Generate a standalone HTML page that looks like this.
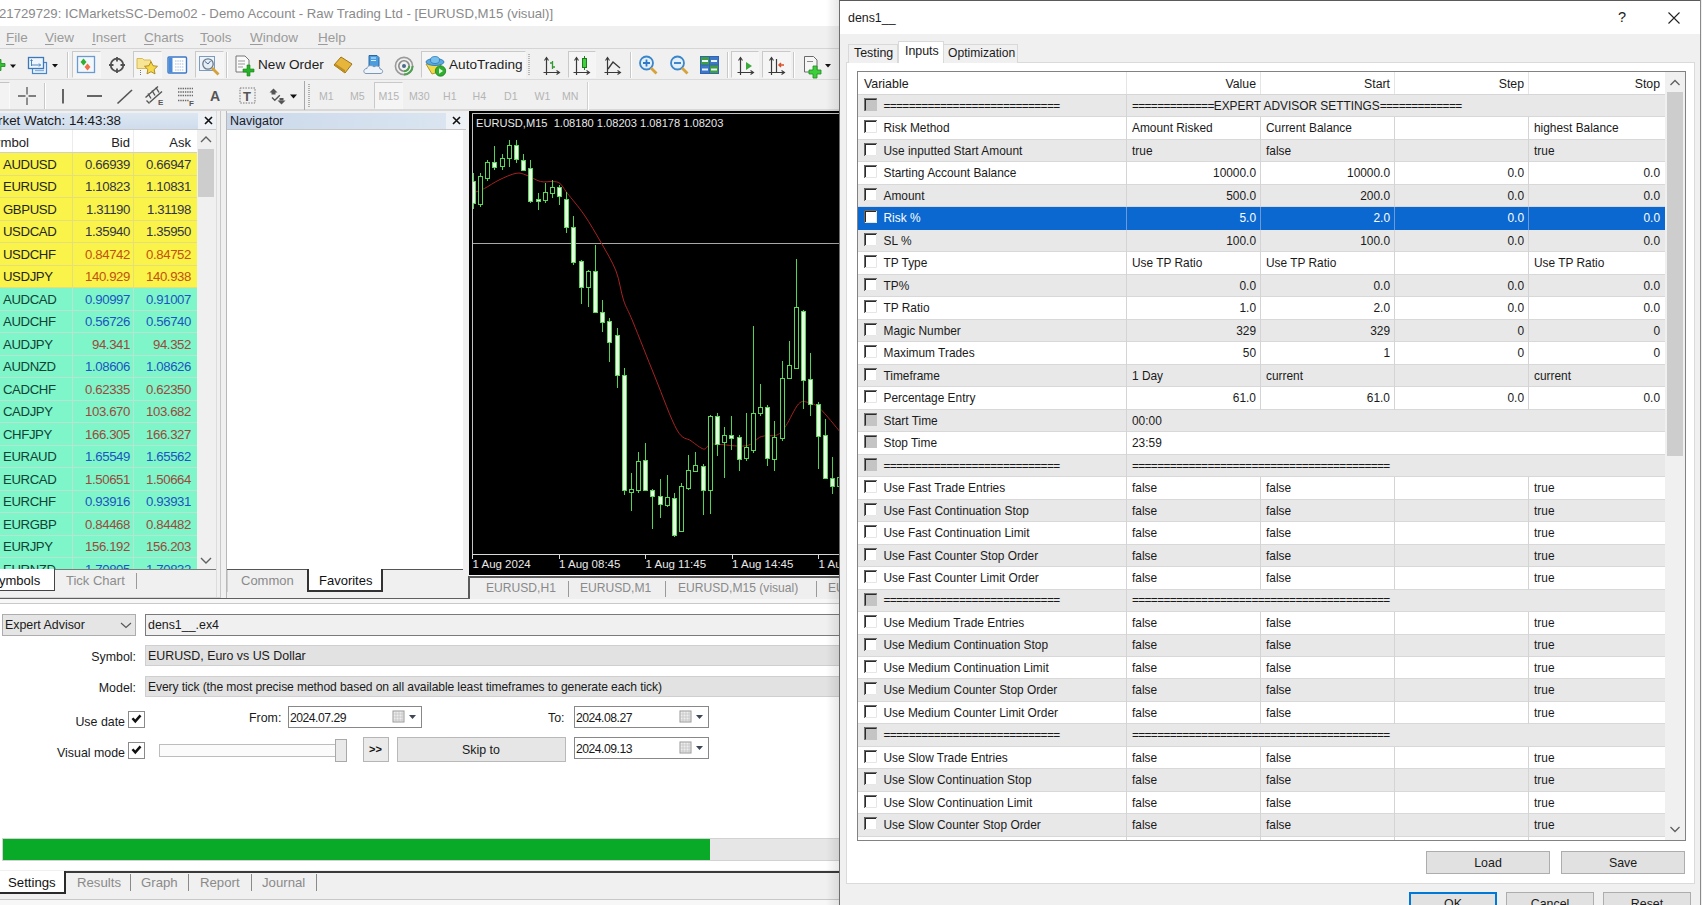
<!DOCTYPE html><html><head><meta charset="utf-8"><style>
*{box-sizing:border-box;margin:0;padding:0}
body{width:1702px;height:905px;overflow:hidden;position:relative;background:#f0f0f0;font-family:"Liberation Sans",sans-serif;color:#222;font-size:12px}
.a{position:absolute}
.t{position:absolute;white-space:nowrap;line-height:1}
u{text-decoration:none;border-bottom:1px solid currentColor;line-height:0.9;display:inline-block}
</style></head><body><div class="a" style="left:0px;top:0px;width:840px;height:26px;background:#fff"></div>
<div class="t" style="left:-1px;top:6.5px;font-size:13.2px;color:#8a8a8a">21729729: ICMarketsSC-Demo02 - Demo Account - Raw Trading Ltd - [EURUSD,M15 (visual)]</div>
<div class="a" style="left:0px;top:26px;width:840px;height:23px;background:#f0f0f0"></div>
<div class="a" style="left:0px;top:48px;width:840px;height:1px;background:#d5d5d5"></div>
<div class="t" style="left:6px;top:31px;font-size:13.5px;color:#9b9b9b"><span style="text-decoration:underline;text-underline-offset:2px">F</span>ile</div>
<div class="t" style="left:45px;top:31px;font-size:13.5px;color:#9b9b9b"><span style="text-decoration:underline;text-underline-offset:2px">V</span>iew</div>
<div class="t" style="left:92px;top:31px;font-size:13.5px;color:#9b9b9b"><span style="text-decoration:underline;text-underline-offset:2px">I</span>nsert</div>
<div class="t" style="left:144px;top:31px;font-size:13.5px;color:#9b9b9b"><span style="text-decoration:underline;text-underline-offset:2px">C</span>harts</div>
<div class="t" style="left:200px;top:31px;font-size:13.5px;color:#9b9b9b"><span style="text-decoration:underline;text-underline-offset:2px">T</span>ools</div>
<div class="t" style="left:250px;top:31px;font-size:13.5px;color:#9b9b9b"><span style="text-decoration:underline;text-underline-offset:2px">W</span>indow</div>
<div class="t" style="left:318px;top:31px;font-size:13.5px;color:#9b9b9b"><span style="text-decoration:underline;text-underline-offset:2px">H</span>elp</div>
<div class="a" style="left:0px;top:49px;width:840px;height:30px;background:#f0f0f0"></div>
<div class="a" style="left:0px;top:79px;width:840px;height:1px;background:#dadada"></div>
<div class="a" style="left:0px;top:80px;width:840px;height:30px;background:#f0f0f0"></div>
<div class="a" style="left:0px;top:109px;width:840px;height:2px;background:#d8d8d8"></div>
<svg class="a" style="left:0px;top:56px;" width="20" height="20" viewBox="0 0 20 20"><path d="M-6 7.5h4v-4h3v4h4v3h-4v4h-3v-4h-4z" fill="#33c033" stroke="#1d8a1d" stroke-width="0.8"/><path d="M10 8.5h6l-3 3.5z" fill="#111"/></svg>
<svg class="a" style="left:27px;top:55px;" width="36" height="21" viewBox="0 0 36 21"><rect x="5.5" y="7.5" width="14" height="11" fill="#eaf3fc" stroke="#4a86c6" stroke-width="1.2"/><path d="M8 15.5h9" stroke="#8ab0d8" stroke-width="1.4"/><rect x="1.5" y="2.5" width="15" height="11" fill="#eef5fc" stroke="#3c78b8" stroke-width="1.3"/><path d="M4.5 5v6M4.5 10h9M12 8.5l1.5 1.5L12 11.5M3.5 6l1 -1.5l1 1.5" stroke="#3c78b8" stroke-width="0.9" fill="none"/><path d="M25 9h6l-3 3.5z" fill="#111"/></svg>
<div class="a" style="left:67px;top:52px;width:1px;height:26px;background:#c8c8c8"></div>
<div class="a" style="left:68px;top:52px;width:1px;height:26px;background:#fff"></div>
<div class="a" style="left:72px;top:51px;width:29px;height:27px;border:1px solid #d9d9d9;border-top-color:#c9c9c9;border-left-color:#c9c9c9;border-right-color:#f6f6f6;border-bottom-color:#f6f6f6;background:#f5f5f5"></div>
<svg class="a" style="left:76px;top:55px;" width="21" height="20" viewBox="0 0 21 20"><rect x="1.5" y="1.5" width="17" height="16" fill="#f2f7fc" stroke="#6a9ad0" stroke-width="1.3"/><path d="M4.5 7L7.5 3.5L10.5 7L7.5 10.5z" fill="#30b030"/><path d="M8.5 12L11.5 8.5L14.5 12L11.5 15.5z" fill="#f07048"/></svg>
<svg class="a" style="left:106px;top:55px;" width="22" height="21" viewBox="0 0 22 21"><circle cx="11" cy="10" r="6.3" fill="none" stroke="#505050" stroke-width="1.8"/><path d="M11 2v4.5M11 13.5V18M3 10h4.5M14.5 10H19" stroke="#505050" stroke-width="1.8"/></svg>
<div class="a" style="left:133px;top:51px;width:29px;height:27px;border:1px solid #d9d9d9;border-top-color:#c9c9c9;border-left-color:#c9c9c9;border-right-color:#f6f6f6;border-bottom-color:#f6f6f6;background:#f5f5f5"></div>
<svg class="a" style="left:136px;top:55px;" width="23" height="21" viewBox="0 0 23 21"><path d="M1 3.5h5.5l1.5 1.5h6.5v8.5H1z" fill="#f7e494" stroke="#d4b648" stroke-width="0.9"/><path d="M15 6.5l2 4.2 4.5.6-3.3 3.1.8 4.5-4-2.2-4 2.2.8-4.5-3.3-3.1 4.5-.6z" fill="#f6d84a" stroke="#a8861c" stroke-width="0.9"/><path d="M4.5 15v5" stroke="#777" stroke-width="1" stroke-dasharray="1 1"/></svg>
<svg class="a" style="left:167px;top:56px;" width="21" height="18" viewBox="0 0 21 18"><rect x="1" y="1" width="18.5" height="16" rx="1" fill="#fff" stroke="#3a78c8" stroke-width="1.4"/><rect x="1.5" y="1.5" width="4" height="15" fill="#4a8ad8"/><path d="M8 5h9M8 8h9M8 11h9M8 14h9" stroke="#9ab8dc" stroke-width="0.9" stroke-dasharray="1.5 0.8"/></svg>
<div class="a" style="left:195px;top:51px;width:29px;height:27px;border:1px solid #d9d9d9;border-top-color:#c9c9c9;border-left-color:#c9c9c9;border-right-color:#f6f6f6;border-bottom-color:#f6f6f6;background:#f5f5f5"></div>
<svg class="a" style="left:198px;top:54px;" width="24" height="23" viewBox="0 0 24 23"><rect x="1.5" y="2.5" width="15" height="14" fill="#edf3f9" stroke="#7a9cc0" stroke-width="1"/><circle cx="10" cy="10" r="5.2" fill="#e6eef6" stroke="#6a7a8a" stroke-width="1.3"/><path d="M7 7.5l3 2.5l2.5 -3" stroke="#4a6a9a" stroke-width="1" fill="none"/><path d="M14 14l6.5 6.5" stroke="#d4a23a" stroke-width="2.8"/></svg>
<div class="a" style="left:226px;top:52px;width:1px;height:26px;background:#c8c8c8"></div>
<div class="a" style="left:227px;top:52px;width:1px;height:26px;background:#fff"></div>
<svg class="a" style="left:234px;top:54px;" width="22" height="24" viewBox="0 0 22 24"><path d="M2 2h9l4 4v12H2z" fill="#fafafa" stroke="#777" stroke-width="1"/><path d="M4 7h7M4 10h7M4 13h5" stroke="#999"/><path d="M13 11h3v4h4v3h-4v4h-3v-4H9v-3h4z" fill="#27b327" stroke="#1a801a" stroke-width="0.6"/></svg>
<div class="t" style="left:258px;top:58px;font-size:13.6px;color:#1e1e1e">New Order</div>
<svg class="a" style="left:332px;top:55px;" width="22" height="20" viewBox="0 0 22 20"><path d="M2 10l7 -8l11 7l-7 9z" fill="#e6b53c" stroke="#9c7414" stroke-width="1"/><path d="M2 10l11 8l0 -3l-9 -6z" fill="#c08d20"/></svg>
<svg class="a" style="left:362px;top:53px;" width="24" height="24" viewBox="0 0 24 24"><path d="M7 2.5h8l2 2v9h-10z" fill="#4a9ee0" stroke="#1f5c9a" stroke-width="0.9"/><path d="M9 5h5M9 7.5h5" stroke="#d8ecfb" stroke-width="1"/><path d="M4 20.5c-3 0-3-5 1-5c0-3 5-4 7-1.5c2-2 6-1 6 2c3 0 4 4.5 0 4.5z" fill="#eef4fa" stroke="#7d97b3" stroke-width="1"/></svg>
<svg class="a" style="left:393px;top:55px;" width="22" height="22" viewBox="0 0 22 22"><circle cx="11" cy="11" r="8.6" fill="none" stroke="#9a9a9a" stroke-width="1.6"/><circle cx="11" cy="11" r="5.2" fill="none" stroke="#8a8a8a" stroke-width="1.6"/><circle cx="11" cy="11" r="2" fill="#4a6a8a"/><path d="M19.6 11A8.6 8.6 0 0 1 11 19.6M16.2 11A5.2 5.2 0 0 1 11 16.2" fill="none" stroke="#4fa04f" stroke-width="2"/></svg>
<div class="a" style="left:421px;top:51px;width:105px;height:27px;border:1px solid #d9d9d9;border-top-color:#c9c9c9;border-left-color:#c9c9c9;border-right-color:#f6f6f6;border-bottom-color:#f6f6f6;background:#f5f5f5"></div>
<svg class="a" style="left:424px;top:54px;" width="24" height="23" viewBox="0 0 24 23"><path d="M2 10L16 8L18 17L8 20z" fill="#efd84a" stroke="#a89020" stroke-width="0.9"/><ellipse cx="11" cy="8" rx="9" ry="3.5" fill="#5aaae0" stroke="#2f78b8" stroke-width="0.9"/><ellipse cx="11" cy="6" rx="4.5" ry="3.5" fill="#78c0ec" stroke="#2f78b8" stroke-width="0.8"/><circle cx="16.5" cy="17" r="5.2" fill="#2fae2f" stroke="#1f801f" stroke-width="0.8"/><path d="M15 14.3l4 2.7l-4 2.7z" fill="#dfffdf"/></svg>
<div class="t" style="left:449px;top:58px;font-size:13.6px;color:#1e1e1e">AutoTrading</div>
<div class="a" style="left:528px;top:54px;width:2px;height:22px;background:repeating-linear-gradient(#b8b8b8 0 1px,transparent 1px 2px)"></div>
<svg class="a" style="left:540px;top:55px;" width="24" height="22" viewBox="0 0 24 22"><path d="M6.5 3V17.5H19" stroke="#3a3a3a" stroke-width="1.2" fill="none"/><path d="M4.5 5.5L6.5 2.5L8.5 5.5M16.5 15.5L19.5 17.5L16.5 19.5" stroke="#3a3a3a" stroke-width="1.1" fill="none"/><path d="M3.5 17.5H6.5M6.5 17.5V20" stroke="#3a3a3a" stroke-width="1.2"/><path d="M12.5 6V14M10 8H12.5M12.5 12H15" stroke="#2f9a2f" stroke-width="1.3"/></svg>
<div class="a" style="left:568px;top:51px;width:28px;height:27px;border:1px solid #d9d9d9;border-top-color:#c9c9c9;border-left-color:#c9c9c9;border-right-color:#f6f6f6;border-bottom-color:#f6f6f6;background:#f5f5f5"></div>
<svg class="a" style="left:570px;top:55px;" width="24" height="22" viewBox="0 0 24 22"><path d="M6.5 3V17.5H19" stroke="#3a3a3a" stroke-width="1.2" fill="none"/><path d="M4.5 5.5L6.5 2.5L8.5 5.5M16.5 15.5L19.5 17.5L16.5 19.5" stroke="#3a3a3a" stroke-width="1.1" fill="none"/><path d="M3.5 17.5H6.5M6.5 17.5V20" stroke="#3a3a3a" stroke-width="1.2"/><rect x="12.5" y="3.5" width="4" height="9" fill="#3fcf3f" stroke="#1f7a1f"/><path d="M14.5 1V3.5M14.5 12.5V15" stroke="#1f7a1f"/></svg>
<svg class="a" style="left:601px;top:55px;" width="24" height="22" viewBox="0 0 24 22"><path d="M6.5 3V17.5H19" stroke="#3a3a3a" stroke-width="1.2" fill="none"/><path d="M4.5 5.5L6.5 2.5L8.5 5.5M16.5 15.5L19.5 17.5L16.5 19.5" stroke="#3a3a3a" stroke-width="1.1" fill="none"/><path d="M3.5 17.5H6.5M6.5 17.5V20" stroke="#3a3a3a" stroke-width="1.2"/><path d="M7 14L12 7L19 13" stroke="#3a3a3a" stroke-width="1.3" fill="none"/></svg>
<div class="a" style="left:630px;top:52px;width:1px;height:26px;background:#c8c8c8"></div>
<div class="a" style="left:631px;top:52px;width:1px;height:26px;background:#fff"></div>
<svg class="a" style="left:637px;top:54px;" width="24" height="24" viewBox="0 0 24 24"><circle cx="9.5" cy="9" r="6.5" fill="#e2f0fb" stroke="#3a86c8" stroke-width="1.8"/><path d="M6 9h7M9.5 5.5v7" stroke="#2f7ac8" stroke-width="1.8"/><path d="M14 14l5.5 5.5" stroke="#d8a23a" stroke-width="2.8"/></svg>
<svg class="a" style="left:668px;top:54px;" width="24" height="24" viewBox="0 0 24 24"><circle cx="9.5" cy="9" r="6.5" fill="#e2f0fb" stroke="#3a86c8" stroke-width="1.8"/><path d="M6 9h7" stroke="#2f7ac8" stroke-width="1.8"/><path d="M14 14l5.5 5.5" stroke="#d8a23a" stroke-width="2.8"/></svg>
<svg class="a" style="left:699px;top:55px;" width="21" height="20" viewBox="0 0 21 20"><rect x="1" y="1" width="19" height="18" fill="#2e64b0"/><rect x="2" y="2" width="8" height="7.5" fill="#3f9f3f"/><rect x="11" y="2" width="8" height="7.5" fill="#3d78c8"/><rect x="2" y="10.5" width="8" height="7.5" fill="#3d78c8"/><rect x="11" y="10.5" width="8" height="7.5" fill="#3f9f3f"/><path d="M3 6h6M12 6h6M3 14.5h6M12 14.5h6" stroke="#e8f2ff" stroke-width="2"/></svg>
<div class="a" style="left:727px;top:52px;width:1px;height:26px;background:#c8c8c8"></div>
<div class="a" style="left:728px;top:52px;width:1px;height:26px;background:#fff"></div>
<div class="a" style="left:731px;top:51px;width:28px;height:27px;border:1px solid #d9d9d9;border-top-color:#c9c9c9;border-left-color:#c9c9c9;border-right-color:#f6f6f6;border-bottom-color:#f6f6f6;background:#f5f5f5"></div>
<svg class="a" style="left:734px;top:55px;" width="24" height="22" viewBox="0 0 24 22"><path d="M6.5 3V17.5H19" stroke="#3a3a3a" stroke-width="1.2" fill="none"/><path d="M4.5 5.5L6.5 2.5L8.5 5.5M16.5 15.5L19.5 17.5L16.5 19.5" stroke="#3a3a3a" stroke-width="1.1" fill="none"/><path d="M3.5 17.5H6.5M6.5 17.5V20" stroke="#3a3a3a" stroke-width="1.2"/><path d="M12 7L18 11L12 15z" fill="#3aaa3a"/></svg>
<div class="a" style="left:762px;top:51px;width:29px;height:27px;border:1px solid #d9d9d9;border-top-color:#c9c9c9;border-left-color:#c9c9c9;border-right-color:#f6f6f6;border-bottom-color:#f6f6f6;background:#f5f5f5"></div>
<svg class="a" style="left:765px;top:55px;" width="24" height="22" viewBox="0 0 24 22"><path d="M6.5 3V17.5H19" stroke="#3a3a3a" stroke-width="1.2" fill="none"/><path d="M4.5 5.5L6.5 2.5L8.5 5.5M16.5 15.5L19.5 17.5L16.5 19.5" stroke="#3a3a3a" stroke-width="1.1" fill="none"/><path d="M3.5 17.5H6.5M6.5 17.5V20" stroke="#3a3a3a" stroke-width="1.2"/><path d="M11.5 4V17" stroke="#3a3a3a" stroke-width="1.2"/><path d="M19 10H14M16 8L14 10L16 12" stroke="#d8502a" stroke-width="1.5" fill="none"/></svg>
<div class="a" style="left:793px;top:52px;width:1px;height:26px;background:#c8c8c8"></div>
<div class="a" style="left:794px;top:52px;width:1px;height:26px;background:#fff"></div>
<svg class="a" style="left:800px;top:53px;" width="36" height="26" viewBox="0 0 36 26"><path d="M4.5 3.5h9l3.5 3.5v12H4.5z" fill="#f6f6f6" stroke="#6a6a6a" stroke-width="1"/><path d="M7 8.5h6" stroke="#888"/><path d="M13 13h4v4h4v4h-4v4h-4v-4H9v-4h4z" fill="#3ccf3c" stroke="#1f8a1f" stroke-width="0.8"/><path d="M25 11h6l-3 3.5z" fill="#111"/></svg>
<div class="a" style="left:0px;top:82px;width:10px;height:27px;border-top:1px solid #c4c4c4;border-right:1px solid #fafafa;background:#f3f3f3"></div>
<svg class="a" style="left:17px;top:86px;" width="20" height="20" viewBox="0 0 20 20"><path d="M10 1v7.5M10 11.5V19M1 10h7.5M11.5 10H19" stroke="#5a5a5a" stroke-width="1.3"/></svg>
<div class="a" style="left:44px;top:83px;width:1px;height:26px;background:#c8c8c8"></div>
<div class="a" style="left:45px;top:83px;width:1px;height:26px;background:#fff"></div>
<svg class="a" style="left:56px;top:86px;" width="14" height="20" viewBox="0 0 14 20"><path d="M7 3v14.5" stroke="#555" stroke-width="1.8"/></svg>
<svg class="a" style="left:84px;top:86px;" width="22" height="20" viewBox="0 0 22 20"><path d="M3 10h15" stroke="#555" stroke-width="1.8"/></svg>
<svg class="a" style="left:114px;top:86px;" width="22" height="20" viewBox="0 0 22 20"><path d="M3.5 17.5L18 4" stroke="#555" stroke-width="1.7"/></svg>
<svg class="a" style="left:144px;top:84px;" width="24" height="24" viewBox="0 0 24 24"><path d="M1.5 13.5L14 2.5M5.5 18.5L18 7.5" stroke="#555" stroke-width="1.4"/><path d="M4 9.5l3 5M8 6.5l3 5M12 3.5l3 5M2.5 16.5l3 3" stroke="#555" stroke-width="1.4"/><text x="14" y="21" font-size="8" font-weight="bold" fill="#555" font-family="Liberation Sans">E</text></svg>
<svg class="a" style="left:176px;top:84px;" width="24" height="24" viewBox="0 0 24 24"><path d="M2 4.5h15M2 8h15M2 11.5h15M2 16.5h11" stroke="#6a6a6a" stroke-width="1.3" stroke-dasharray="1.4 0.9"/><text x="13" y="21.5" font-size="8" font-weight="bold" fill="#555" font-family="Liberation Sans">F</text></svg>
<div class="t" style="left:210px;top:89px;font-size:14px;font-weight:bold;color:#555">A</div>
<svg class="a" style="left:238px;top:85px;" width="20" height="22" viewBox="0 0 20 22"><rect x="2" y="3" width="15" height="15" fill="none" stroke="#777" stroke-dasharray="1.5 1.2"/><text x="5" y="16" font-size="13" font-weight="bold" fill="#555" font-family="Liberation Sans">T</text></svg>
<svg class="a" style="left:266px;top:85px;" width="36" height="22" viewBox="0 0 36 22"><path d="M3.5 7.5L7.5 3.5L11.5 7.5z" fill="#555"/><rect x="5.5" y="7" width="4" height="2.5" fill="#555"/><path d="M6 12.5l2.8 2.8l5 -5" stroke="#555" stroke-width="1.4" fill="none"/><path d="M11.5 15.5L15.5 19.5L19.5 15.5z" fill="#555"/><rect x="13.5" y="13" width="4" height="2.5" fill="#555"/><path d="M24 9.5h7l-3.5 4z" fill="#111"/></svg>
<div class="a" style="left:304px;top:81px;width:1px;height:29px;background:#a8a8a8"></div>
<div class="a" style="left:308px;top:84px;width:2px;height:24px;background:repeating-linear-gradient(#b0b0b0 0 1px,transparent 1px 2px)"></div>
<div class="a" style="left:374px;top:82px;width:29px;height:27px;border:1px solid #d9d9d9;border-top-color:#c9c9c9;border-left-color:#c9c9c9;border-right-color:#f6f6f6;border-bottom-color:#f6f6f6;background:#f5f5f5"></div>
<div class="t" style="left:319px;top:91px;font-size:10.6px;color:#b4b4b4">M1</div>
<div class="t" style="left:350px;top:91px;font-size:10.6px;color:#b4b4b4">M5</div>
<div class="t" style="left:378.5px;top:91px;font-size:10.6px;color:#b4b4b4">M15</div>
<div class="t" style="left:409px;top:91px;font-size:10.6px;color:#b4b4b4">M30</div>
<div class="t" style="left:443px;top:91px;font-size:10.6px;color:#b4b4b4">H1</div>
<div class="t" style="left:472.5px;top:91px;font-size:10.6px;color:#b4b4b4">H4</div>
<div class="t" style="left:504px;top:91px;font-size:10.6px;color:#b4b4b4">D1</div>
<div class="t" style="left:534.5px;top:91px;font-size:10.6px;color:#b4b4b4">W1</div>
<div class="t" style="left:562px;top:91px;font-size:10.6px;color:#b4b4b4">MN</div>
<div class="a" style="left:587px;top:82px;width:1px;height:28px;background:#d0d0d0"></div>
<div class="a" style="left:588px;top:82px;width:1px;height:28px;background:#fff"></div>
<div class="a" style="left:0px;top:111px;width:218px;height:490px;background:#f0f0f0"></div>
<div class="a" style="left:0px;top:113px;width:198px;height:16px;background:linear-gradient(#dde7f2,#cfdcec)"></div>
<div class="a" style="left:198px;top:113px;width:18px;height:16px;background:#eef2f6"></div>
<div class="t" style="left:-2px;top:114px;font-size:13.4px;color:#1a1a1a">rket Watch: 14:43:38</div>
<svg class="a" style="left:204px;top:116px;" width="9" height="9" viewBox="0 0 9 9"><path d="M1 1L8 8M8 1L1 8" stroke="#111" stroke-width="1.6"/></svg>
<div class="a" style="left:0px;top:129px;width:216px;height:1px;background:#c9c9c9"></div>
<div class="a" style="left:0px;top:130px;width:197px;height:23px;background:#fff"></div>
<div class="a" style="left:72px;top:130px;width:1px;height:23px;background:#ececec"></div>
<div class="a" style="left:133px;top:130px;width:1px;height:23px;background:#ececec"></div>
<div class="t" style="left:-15px;top:136px;font-size:13.2px;color:#222">Symbol</div>
<div class="t" style="right:1572px;top:136px;font-size:13px;color:#222">Bid</div>
<div class="t" style="right:1511px;top:136px;font-size:13px;color:#222">Ask</div>
<div class="a" style="left:0px;top:152px;width:197px;height:1px;background:#cfcfcf"></div>
<div class="a" style="left:0;top:153px;width:197px;height:416px;overflow:hidden">
<div class="a" style="left:0;top:0.0px;width:197px;height:22.5px;background:#f9f34a;border-bottom:1px solid #e6df78"></div>
<div class="a" style="left:72px;top:0.0px;width:1px;height:22.5px;background:#e6df78"></div>
<div class="a" style="left:133px;top:0.0px;width:1px;height:22.5px;background:#e6df78"></div>
<div class="t" style="left:3px;top:4.8px;font-size:13.2px;letter-spacing:-0.4px;color:#26261a">AUDUSD</div>
<div class="t" style="right:67px;top:4.8px;font-size:13.2px;letter-spacing:-0.38px;color:#333344">0.66939</div>
<div class="t" style="right:6px;top:4.8px;font-size:13.2px;letter-spacing:-0.38px;color:#333344">0.66947</div>
<div class="a" style="left:0;top:22.5px;width:197px;height:22.5px;background:#f9f34a;border-bottom:1px solid #e6df78"></div>
<div class="a" style="left:72px;top:22.5px;width:1px;height:22.5px;background:#e6df78"></div>
<div class="a" style="left:133px;top:22.5px;width:1px;height:22.5px;background:#e6df78"></div>
<div class="t" style="left:3px;top:27.3px;font-size:13.2px;letter-spacing:-0.4px;color:#26261a">EURUSD</div>
<div class="t" style="right:67px;top:27.3px;font-size:13.2px;letter-spacing:-0.38px;color:#333344">1.10823</div>
<div class="t" style="right:6px;top:27.3px;font-size:13.2px;letter-spacing:-0.38px;color:#333344">1.10831</div>
<div class="a" style="left:0;top:45.0px;width:197px;height:22.5px;background:#f9f34a;border-bottom:1px solid #e6df78"></div>
<div class="a" style="left:72px;top:45.0px;width:1px;height:22.5px;background:#e6df78"></div>
<div class="a" style="left:133px;top:45.0px;width:1px;height:22.5px;background:#e6df78"></div>
<div class="t" style="left:3px;top:49.8px;font-size:13.2px;letter-spacing:-0.4px;color:#26261a">GBPUSD</div>
<div class="t" style="right:67px;top:49.8px;font-size:13.2px;letter-spacing:-0.38px;color:#333344">1.31190</div>
<div class="t" style="right:6px;top:49.8px;font-size:13.2px;letter-spacing:-0.38px;color:#333344">1.31198</div>
<div class="a" style="left:0;top:67.5px;width:197px;height:22.5px;background:#f9f34a;border-bottom:1px solid #e6df78"></div>
<div class="a" style="left:72px;top:67.5px;width:1px;height:22.5px;background:#e6df78"></div>
<div class="a" style="left:133px;top:67.5px;width:1px;height:22.5px;background:#e6df78"></div>
<div class="t" style="left:3px;top:72.3px;font-size:13.2px;letter-spacing:-0.4px;color:#26261a">USDCAD</div>
<div class="t" style="right:67px;top:72.3px;font-size:13.2px;letter-spacing:-0.38px;color:#333344">1.35940</div>
<div class="t" style="right:6px;top:72.3px;font-size:13.2px;letter-spacing:-0.38px;color:#333344">1.35950</div>
<div class="a" style="left:0;top:90.0px;width:197px;height:22.5px;background:#f9f34a;border-bottom:1px solid #e6df78"></div>
<div class="a" style="left:72px;top:90.0px;width:1px;height:22.5px;background:#e6df78"></div>
<div class="a" style="left:133px;top:90.0px;width:1px;height:22.5px;background:#e6df78"></div>
<div class="t" style="left:3px;top:94.8px;font-size:13.2px;letter-spacing:-0.4px;color:#26261a">USDCHF</div>
<div class="t" style="right:67px;top:94.8px;font-size:13.2px;letter-spacing:-0.38px;color:#c2520e">0.84742</div>
<div class="t" style="right:6px;top:94.8px;font-size:13.2px;letter-spacing:-0.38px;color:#c2520e">0.84752</div>
<div class="a" style="left:0;top:112.5px;width:197px;height:22.5px;background:#f9f34a;border-bottom:1px solid #e6df78"></div>
<div class="a" style="left:72px;top:112.5px;width:1px;height:22.5px;background:#e6df78"></div>
<div class="a" style="left:133px;top:112.5px;width:1px;height:22.5px;background:#e6df78"></div>
<div class="t" style="left:3px;top:117.3px;font-size:13.2px;letter-spacing:-0.4px;color:#26261a">USDJPY</div>
<div class="t" style="right:67px;top:117.3px;font-size:13.2px;letter-spacing:-0.38px;color:#c2520e">140.929</div>
<div class="t" style="right:6px;top:117.3px;font-size:13.2px;letter-spacing:-0.38px;color:#c2520e">140.938</div>
<div class="a" style="left:0;top:135.0px;width:197px;height:22.5px;background:#7ff5ca;border-bottom:1px solid #b4e6d2"></div>
<div class="a" style="left:72px;top:135.0px;width:1px;height:22.5px;background:#b4e6d2"></div>
<div class="a" style="left:133px;top:135.0px;width:1px;height:22.5px;background:#b4e6d2"></div>
<div class="t" style="left:3px;top:139.8px;font-size:13.2px;letter-spacing:-0.4px;color:#0e4434">AUDCAD</div>
<div class="t" style="right:67px;top:139.8px;font-size:13.2px;letter-spacing:-0.38px;color:#1a55c0">0.90997</div>
<div class="t" style="right:6px;top:139.8px;font-size:13.2px;letter-spacing:-0.38px;color:#1a55c0">0.91007</div>
<div class="a" style="left:0;top:157.5px;width:197px;height:22.5px;background:#7ff5ca;border-bottom:1px solid #b4e6d2"></div>
<div class="a" style="left:72px;top:157.5px;width:1px;height:22.5px;background:#b4e6d2"></div>
<div class="a" style="left:133px;top:157.5px;width:1px;height:22.5px;background:#b4e6d2"></div>
<div class="t" style="left:3px;top:162.3px;font-size:13.2px;letter-spacing:-0.4px;color:#0e4434">AUDCHF</div>
<div class="t" style="right:67px;top:162.3px;font-size:13.2px;letter-spacing:-0.38px;color:#1a55c0">0.56726</div>
<div class="t" style="right:6px;top:162.3px;font-size:13.2px;letter-spacing:-0.38px;color:#1a55c0">0.56740</div>
<div class="a" style="left:0;top:180.0px;width:197px;height:22.5px;background:#7ff5ca;border-bottom:1px solid #b4e6d2"></div>
<div class="a" style="left:72px;top:180.0px;width:1px;height:22.5px;background:#b4e6d2"></div>
<div class="a" style="left:133px;top:180.0px;width:1px;height:22.5px;background:#b4e6d2"></div>
<div class="t" style="left:3px;top:184.8px;font-size:13.2px;letter-spacing:-0.4px;color:#0e4434">AUDJPY</div>
<div class="t" style="right:67px;top:184.8px;font-size:13.2px;letter-spacing:-0.38px;color:#9a4a3a">94.341</div>
<div class="t" style="right:6px;top:184.8px;font-size:13.2px;letter-spacing:-0.38px;color:#9a4a3a">94.352</div>
<div class="a" style="left:0;top:202.5px;width:197px;height:22.5px;background:#7ff5ca;border-bottom:1px solid #b4e6d2"></div>
<div class="a" style="left:72px;top:202.5px;width:1px;height:22.5px;background:#b4e6d2"></div>
<div class="a" style="left:133px;top:202.5px;width:1px;height:22.5px;background:#b4e6d2"></div>
<div class="t" style="left:3px;top:207.3px;font-size:13.2px;letter-spacing:-0.4px;color:#0e4434">AUDNZD</div>
<div class="t" style="right:67px;top:207.3px;font-size:13.2px;letter-spacing:-0.38px;color:#1a55c0">1.08606</div>
<div class="t" style="right:6px;top:207.3px;font-size:13.2px;letter-spacing:-0.38px;color:#1a55c0">1.08626</div>
<div class="a" style="left:0;top:225.0px;width:197px;height:22.5px;background:#7ff5ca;border-bottom:1px solid #b4e6d2"></div>
<div class="a" style="left:72px;top:225.0px;width:1px;height:22.5px;background:#b4e6d2"></div>
<div class="a" style="left:133px;top:225.0px;width:1px;height:22.5px;background:#b4e6d2"></div>
<div class="t" style="left:3px;top:229.8px;font-size:13.2px;letter-spacing:-0.4px;color:#0e4434">CADCHF</div>
<div class="t" style="right:67px;top:229.8px;font-size:13.2px;letter-spacing:-0.38px;color:#9a4a3a">0.62335</div>
<div class="t" style="right:6px;top:229.8px;font-size:13.2px;letter-spacing:-0.38px;color:#9a4a3a">0.62350</div>
<div class="a" style="left:0;top:247.5px;width:197px;height:22.5px;background:#7ff5ca;border-bottom:1px solid #b4e6d2"></div>
<div class="a" style="left:72px;top:247.5px;width:1px;height:22.5px;background:#b4e6d2"></div>
<div class="a" style="left:133px;top:247.5px;width:1px;height:22.5px;background:#b4e6d2"></div>
<div class="t" style="left:3px;top:252.3px;font-size:13.2px;letter-spacing:-0.4px;color:#0e4434">CADJPY</div>
<div class="t" style="right:67px;top:252.3px;font-size:13.2px;letter-spacing:-0.38px;color:#9a4a3a">103.670</div>
<div class="t" style="right:6px;top:252.3px;font-size:13.2px;letter-spacing:-0.38px;color:#9a4a3a">103.682</div>
<div class="a" style="left:0;top:270.0px;width:197px;height:22.5px;background:#7ff5ca;border-bottom:1px solid #b4e6d2"></div>
<div class="a" style="left:72px;top:270.0px;width:1px;height:22.5px;background:#b4e6d2"></div>
<div class="a" style="left:133px;top:270.0px;width:1px;height:22.5px;background:#b4e6d2"></div>
<div class="t" style="left:3px;top:274.8px;font-size:13.2px;letter-spacing:-0.4px;color:#0e4434">CHFJPY</div>
<div class="t" style="right:67px;top:274.8px;font-size:13.2px;letter-spacing:-0.38px;color:#9a4a3a">166.305</div>
<div class="t" style="right:6px;top:274.8px;font-size:13.2px;letter-spacing:-0.38px;color:#9a4a3a">166.327</div>
<div class="a" style="left:0;top:292.5px;width:197px;height:22.5px;background:#7ff5ca;border-bottom:1px solid #b4e6d2"></div>
<div class="a" style="left:72px;top:292.5px;width:1px;height:22.5px;background:#b4e6d2"></div>
<div class="a" style="left:133px;top:292.5px;width:1px;height:22.5px;background:#b4e6d2"></div>
<div class="t" style="left:3px;top:297.3px;font-size:13.2px;letter-spacing:-0.4px;color:#0e4434">EURAUD</div>
<div class="t" style="right:67px;top:297.3px;font-size:13.2px;letter-spacing:-0.38px;color:#1a55c0">1.65549</div>
<div class="t" style="right:6px;top:297.3px;font-size:13.2px;letter-spacing:-0.38px;color:#1a55c0">1.65562</div>
<div class="a" style="left:0;top:315.0px;width:197px;height:22.5px;background:#7ff5ca;border-bottom:1px solid #b4e6d2"></div>
<div class="a" style="left:72px;top:315.0px;width:1px;height:22.5px;background:#b4e6d2"></div>
<div class="a" style="left:133px;top:315.0px;width:1px;height:22.5px;background:#b4e6d2"></div>
<div class="t" style="left:3px;top:319.8px;font-size:13.2px;letter-spacing:-0.4px;color:#0e4434">EURCAD</div>
<div class="t" style="right:67px;top:319.8px;font-size:13.2px;letter-spacing:-0.38px;color:#9a4a3a">1.50651</div>
<div class="t" style="right:6px;top:319.8px;font-size:13.2px;letter-spacing:-0.38px;color:#9a4a3a">1.50664</div>
<div class="a" style="left:0;top:337.5px;width:197px;height:22.5px;background:#7ff5ca;border-bottom:1px solid #b4e6d2"></div>
<div class="a" style="left:72px;top:337.5px;width:1px;height:22.5px;background:#b4e6d2"></div>
<div class="a" style="left:133px;top:337.5px;width:1px;height:22.5px;background:#b4e6d2"></div>
<div class="t" style="left:3px;top:342.3px;font-size:13.2px;letter-spacing:-0.4px;color:#0e4434">EURCHF</div>
<div class="t" style="right:67px;top:342.3px;font-size:13.2px;letter-spacing:-0.38px;color:#1a55c0">0.93916</div>
<div class="t" style="right:6px;top:342.3px;font-size:13.2px;letter-spacing:-0.38px;color:#1a55c0">0.93931</div>
<div class="a" style="left:0;top:360.0px;width:197px;height:22.5px;background:#7ff5ca;border-bottom:1px solid #b4e6d2"></div>
<div class="a" style="left:72px;top:360.0px;width:1px;height:22.5px;background:#b4e6d2"></div>
<div class="a" style="left:133px;top:360.0px;width:1px;height:22.5px;background:#b4e6d2"></div>
<div class="t" style="left:3px;top:364.8px;font-size:13.2px;letter-spacing:-0.4px;color:#0e4434">EURGBP</div>
<div class="t" style="right:67px;top:364.8px;font-size:13.2px;letter-spacing:-0.38px;color:#9a4a3a">0.84468</div>
<div class="t" style="right:6px;top:364.8px;font-size:13.2px;letter-spacing:-0.38px;color:#9a4a3a">0.84482</div>
<div class="a" style="left:0;top:382.5px;width:197px;height:22.5px;background:#7ff5ca;border-bottom:1px solid #b4e6d2"></div>
<div class="a" style="left:72px;top:382.5px;width:1px;height:22.5px;background:#b4e6d2"></div>
<div class="a" style="left:133px;top:382.5px;width:1px;height:22.5px;background:#b4e6d2"></div>
<div class="t" style="left:3px;top:387.3px;font-size:13.2px;letter-spacing:-0.4px;color:#0e4434">EURJPY</div>
<div class="t" style="right:67px;top:387.3px;font-size:13.2px;letter-spacing:-0.38px;color:#9a4a3a">156.192</div>
<div class="t" style="right:6px;top:387.3px;font-size:13.2px;letter-spacing:-0.38px;color:#9a4a3a">156.203</div>
<div class="a" style="left:0;top:405.0px;width:197px;height:22.5px;background:#7ff5ca;border-bottom:1px solid #b4e6d2"></div>
<div class="a" style="left:72px;top:405.0px;width:1px;height:22.5px;background:#b4e6d2"></div>
<div class="a" style="left:133px;top:405.0px;width:1px;height:22.5px;background:#b4e6d2"></div>
<div class="t" style="left:3px;top:409.8px;font-size:13.2px;letter-spacing:-0.4px;color:#0e4434">EURNZD</div>
<div class="t" style="right:67px;top:409.8px;font-size:13.2px;letter-spacing:-0.38px;color:#1a55c0">1.70805</div>
<div class="t" style="right:6px;top:409.8px;font-size:13.2px;letter-spacing:-0.38px;color:#1a55c0">1.70832</div>
</div>
<div class="a" style="left:197px;top:130px;width:18px;height:439px;background:#f0f0f0"></div>
<div class="a" style="left:198px;top:149px;width:16px;height:48px;background:#cdcdcd"></div>
<svg class="a" style="left:199px;top:134px;" width="14" height="12" viewBox="0 0 14 12"><path d="M2 8l5 -5l5 5" stroke="#606060" stroke-width="1.4" fill="none"/></svg>
<svg class="a" style="left:199px;top:554px;" width="14" height="12" viewBox="0 0 14 12"><path d="M2 4l5 5l5 -5" stroke="#606060" stroke-width="1.4" fill="none"/></svg>
<div class="a" style="left:0px;top:569px;width:216px;height:1px;background:#7a7a7a"></div>
<div class="a" style="left:0px;top:569px;width:55px;height:22px;background:#fff;border:1px solid #444;border-top:none;border-left:none"></div>
<div class="t" style="left:-1px;top:574px;font-size:13px;color:#111">ymbols</div>
<div class="t" style="left:66px;top:574px;font-size:13px;color:#8c8c8c">Tick Chart</div>
<div class="a" style="left:136px;top:573px;width:1px;height:16px;background:#9a9a9a"></div>
<div class="a" style="left:216px;top:111px;width:1px;height:487px;background:#dcdcdc"></div>
<div class="a" style="left:0px;top:597px;width:220px;height:1px;background:#d4d4d4"></div>
<div class="a" style="left:220px;top:111px;width:1px;height:487px;background:#c8c8c8"></div>
<div class="a" style="left:226px;top:111px;width:242px;height:487px;background:#f0f0f0"></div>
<div class="a" style="left:227px;top:113px;width:239px;height:16px;background:linear-gradient(90deg,#cad8ea,#dce6f2)"></div>
<div class="t" style="left:230px;top:115px;font-size:12.5px;color:#1a1a2a">Navigator</div>
<div class="a" style="left:446px;top:113px;width:20px;height:16px;background:#eef1f5"></div>
<svg class="a" style="left:452px;top:116px;" width="9" height="9" viewBox="0 0 9 9"><path d="M1 1L8 8M8 1L1 8" stroke="#111" stroke-width="1.6"/></svg>
<div class="a" style="left:227px;top:129px;width:239px;height:1px;background:#c6c6c6"></div>
<div class="a" style="left:227px;top:130px;width:236px;height:440px;background:#fff"></div>
<div class="a" style="left:226px;top:111px;width:1px;height:487px;background:#b8b8b8"></div>
<div class="a" style="left:227px;top:569px;width:236px;height:1px;background:#555"></div>
<div class="a" style="left:227px;top:570px;width:1px;height:22px;background:#cfcfcf"></div>
<div class="t" style="left:241px;top:574px;font-size:13px;color:#8a8a8a">Common</div>
<div class="a" style="left:307px;top:569px;width:76px;height:23px;background:#fff;border:2px solid #333;border-top:none"></div>
<div class="t" style="left:319px;top:574px;font-size:13px;color:#111">Favorites</div>
<div class="a" style="left:468px;top:111px;width:372px;height:492px;background:#f0f0f0"></div>
<svg class="a" style="left:469px;top:111px;" width="371" height="464" viewBox="0 0 371 464"><rect x="0" y="0" width="371" height="464" fill="#000"/><path d="M3.5 2.5H371M3.5 2.5V443" stroke="#c4c4c4" stroke-width="1"/><path d="M3 132.5H371" stroke="#a8a8a8" stroke-width="1"/><path d="M3 443.5H371" stroke="#d8d8d8" stroke-width="1"/><path d="M3.5 443V448" stroke="#d8d8d8" stroke-width="1"/><path d="M90.5 443V448" stroke="#d8d8d8" stroke-width="1"/><path d="M176.5 443V448" stroke="#d8d8d8" stroke-width="1"/><path d="M263.5 443V448" stroke="#d8d8d8" stroke-width="1"/><path d="M349.5 443V448" stroke="#d8d8d8" stroke-width="1"/><path d="M4.0 82.0 C5.9 81.2 11.3 79.6 15.6 77.4 C19.9 75.2 24.8 71.5 30.0 69.0 C35.2 66.5 42.5 63.1 47.0 62.3 C51.5 61.5 52.9 62.6 57.0 64.0 C61.1 65.4 67.0 69.4 71.5 70.5 C76.0 71.6 80.5 70.2 83.7 70.5 C87.0 70.8 88.6 70.5 91.0 72.5 C93.4 74.5 94.2 76.9 98.3 82.2 C102.3 87.4 109.6 95.7 115.3 104.0 C121.0 112.3 127.0 122.7 132.3 132.0 C137.6 141.3 143.3 150.5 147.0 160.0 C150.7 169.5 151.7 180.5 154.5 189.0 C157.3 197.5 158.8 198.2 164.0 211.0 C169.2 223.8 178.7 248.0 186.0 266.0 C193.3 284.0 202.0 308.4 208.0 319.0 C214.0 329.6 217.6 326.6 222.0 329.8 C226.4 333.0 231.5 337.3 234.5 338.0 C237.5 338.7 238.1 334.8 240.0 334.0 C241.9 333.2 239.8 332.9 246.0 333.0 C252.2 333.1 269.3 336.1 277.0 334.8 C284.7 333.6 287.2 327.3 292.4 325.5 C297.6 323.7 303.9 325.8 308.0 324.0 C312.1 322.2 313.4 319.8 317.0 314.6 C320.6 309.4 325.8 296.9 329.5 293.0 C333.2 289.1 335.4 290.6 339.0 291.4 C342.6 292.2 345.7 292.7 351.0 297.6 C356.3 302.5 367.7 316.9 371.0 320.8" fill="none" stroke="#a82222" stroke-width="1"/><path d="M4.5 62V98" stroke="#52d452" stroke-width="1"/><rect x="2.5" y="70.5" width="4" height="22" fill="#e6ffe0" stroke="#5ad85a" stroke-width="1"/><path d="M11.5 62V96" stroke="#52d452" stroke-width="1"/><rect x="9.5" y="65.5" width="4" height="28" fill="#000" stroke="#5ad85a" stroke-width="1"/><path d="M18.5 49V70" stroke="#52d452" stroke-width="1"/><rect x="16.5" y="51.5" width="4" height="16" fill="#000" stroke="#5ad85a" stroke-width="1"/><path d="M25.5 35V59" stroke="#52d452" stroke-width="1"/><rect x="23.5" y="51.5" width="4" height="5" fill="#e6ffe0" stroke="#5ad85a" stroke-width="1"/><path d="M33.5 43V59" stroke="#52d452" stroke-width="1"/><rect x="31.5" y="47.5" width="4" height="8" fill="#000" stroke="#5ad85a" stroke-width="1"/><path d="M40.5 29V56" stroke="#52d452" stroke-width="1"/><rect x="38.5" y="34.5" width="4" height="13" fill="#000" stroke="#5ad85a" stroke-width="1"/><path d="M47.5 29V52" stroke="#52d452" stroke-width="1"/><rect x="45.5" y="34.5" width="4" height="14" fill="#e6ffe0" stroke="#5ad85a" stroke-width="1"/><path d="M54.5 43V60" stroke="#52d452" stroke-width="1"/><rect x="52.5" y="49.5" width="4" height="10" fill="#e6ffe0" stroke="#5ad85a" stroke-width="1"/><path d="M61.5 49V92" stroke="#52d452" stroke-width="1"/><rect x="59.5" y="57.5" width="4" height="33" fill="#e6ffe0" stroke="#5ad85a" stroke-width="1"/><path d="M69.5 82V99" stroke="#52d452" stroke-width="1"/><rect x="67.5" y="88.5" width="4" height="2" fill="#e6ffe0" stroke="#5ad85a" stroke-width="1"/><path d="M76.5 72V92" stroke="#52d452" stroke-width="1"/><rect x="74.5" y="81.5" width="4" height="8" fill="#000" stroke="#5ad85a" stroke-width="1"/><path d="M83.5 69V87" stroke="#52d452" stroke-width="1"/><rect x="81.5" y="76.5" width="4" height="6" fill="#000" stroke="#5ad85a" stroke-width="1"/><path d="M90.5 74V94" stroke="#52d452" stroke-width="1"/><rect x="88.5" y="76.5" width="4" height="9" fill="#e6ffe0" stroke="#5ad85a" stroke-width="1"/><path d="M97.5 81V122" stroke="#52d452" stroke-width="1"/><rect x="95.5" y="88.5" width="4" height="28" fill="#e6ffe0" stroke="#5ad85a" stroke-width="1"/><path d="M104.5 105V154" stroke="#52d452" stroke-width="1"/><rect x="102.5" y="116.5" width="4" height="35" fill="#e6ffe0" stroke="#5ad85a" stroke-width="1"/><path d="M112.5 149V193" stroke="#52d452" stroke-width="1"/><rect x="110.5" y="150.5" width="4" height="26" fill="#e6ffe0" stroke="#5ad85a" stroke-width="1"/><path d="M119.5 159V196" stroke="#52d452" stroke-width="1"/><rect x="117.5" y="160.5" width="4" height="16" fill="#000" stroke="#5ad85a" stroke-width="1"/><path d="M126.5 134V201" stroke="#52d452" stroke-width="1"/><rect x="124.5" y="160.5" width="4" height="41" fill="#e6ffe0" stroke="#5ad85a" stroke-width="1"/><path d="M133.5 189V221" stroke="#52d452" stroke-width="1"/><rect x="131.5" y="201.5" width="4" height="10" fill="#e6ffe0" stroke="#5ad85a" stroke-width="1"/><path d="M140.5 207V251" stroke="#52d452" stroke-width="1"/><rect x="138.5" y="210.5" width="4" height="21" fill="#e6ffe0" stroke="#5ad85a" stroke-width="1"/><path d="M148.5 217V277" stroke="#52d452" stroke-width="1"/><rect x="146.5" y="224.5" width="4" height="40" fill="#e6ffe0" stroke="#5ad85a" stroke-width="1"/><path d="M155.5 257V384" stroke="#52d452" stroke-width="1"/><rect x="153.5" y="264.5" width="4" height="115" fill="#e6ffe0" stroke="#5ad85a" stroke-width="1"/><path d="M162.5 362V400" stroke="#52d452" stroke-width="1"/><rect x="160.5" y="378.5" width="4" height="3" fill="#000" stroke="#5ad85a" stroke-width="1"/><path d="M169.5 341V382" stroke="#52d452" stroke-width="1"/><rect x="167.5" y="350.5" width="4" height="29" fill="#000" stroke="#5ad85a" stroke-width="1"/><path d="M176.5 332V379" stroke="#52d452" stroke-width="1"/><rect x="174.5" y="349.5" width="4" height="30" fill="#e6ffe0" stroke="#5ad85a" stroke-width="1"/><path d="M183.5 378V418" stroke="#52d452" stroke-width="1"/><rect x="181.5" y="379.5" width="4" height="6" fill="#e6ffe0" stroke="#5ad85a" stroke-width="1"/><path d="M191.5 368V407" stroke="#52d452" stroke-width="1"/><rect x="189.5" y="385.5" width="4" height="8" fill="#e6ffe0" stroke="#5ad85a" stroke-width="1"/><path d="M198.5 364V396" stroke="#52d452" stroke-width="1"/><rect x="196.5" y="386.5" width="4" height="8" fill="#000" stroke="#5ad85a" stroke-width="1"/><path d="M205.5 382V426" stroke="#52d452" stroke-width="1"/><rect x="203.5" y="387.5" width="4" height="37" fill="#e6ffe0" stroke="#5ad85a" stroke-width="1"/><path d="M212.5 372V421" stroke="#52d452" stroke-width="1"/><rect x="210.5" y="375.5" width="4" height="45" fill="#000" stroke="#5ad85a" stroke-width="1"/><path d="M219.5 344V379" stroke="#52d452" stroke-width="1"/><rect x="217.5" y="359.5" width="4" height="18" fill="#000" stroke="#5ad85a" stroke-width="1"/><path d="M226.5 341V360" stroke="#52d452" stroke-width="1"/><rect x="224.5" y="354.5" width="4" height="6" fill="#000" stroke="#5ad85a" stroke-width="1"/><path d="M234.5 353V404" stroke="#52d452" stroke-width="1"/><rect x="232.5" y="355.5" width="4" height="24" fill="#e6ffe0" stroke="#5ad85a" stroke-width="1"/><path d="M241.5 304V403" stroke="#52d452" stroke-width="1"/><rect x="239.5" y="305.5" width="4" height="74" fill="#000" stroke="#5ad85a" stroke-width="1"/><path d="M248.5 302V345" stroke="#52d452" stroke-width="1"/><rect x="246.5" y="305.5" width="4" height="28" fill="#e6ffe0" stroke="#5ad85a" stroke-width="1"/><path d="M255.5 316V367" stroke="#52d452" stroke-width="1"/><rect x="253.5" y="324.5" width="4" height="7" fill="#000" stroke="#5ad85a" stroke-width="1"/><path d="M262.5 305V339" stroke="#52d452" stroke-width="1"/><rect x="260.5" y="324.5" width="4" height="3" fill="#e6ffe0" stroke="#5ad85a" stroke-width="1"/><path d="M270.5 324V360" stroke="#52d452" stroke-width="1"/><rect x="268.5" y="326.5" width="4" height="22" fill="#e6ffe0" stroke="#5ad85a" stroke-width="1"/><path d="M277.5 302V350" stroke="#52d452" stroke-width="1"/><rect x="275.5" y="336.5" width="4" height="11" fill="#000" stroke="#5ad85a" stroke-width="1"/><path d="M284.5 215V342" stroke="#52d452" stroke-width="1"/><rect x="282.5" y="302.5" width="4" height="37" fill="#000" stroke="#5ad85a" stroke-width="1"/><path d="M291.5 273V305" stroke="#52d452" stroke-width="1"/><rect x="289.5" y="296.5" width="4" height="6" fill="#000" stroke="#5ad85a" stroke-width="1"/><path d="M298.5 294V355" stroke="#52d452" stroke-width="1"/><rect x="296.5" y="296.5" width="4" height="51" fill="#e6ffe0" stroke="#5ad85a" stroke-width="1"/><path d="M305.5 310V360" stroke="#52d452" stroke-width="1"/><rect x="303.5" y="326.5" width="4" height="22" fill="#000" stroke="#5ad85a" stroke-width="1"/><path d="M313.5 250V330" stroke="#52d452" stroke-width="1"/><rect x="311.5" y="267.5" width="4" height="60" fill="#000" stroke="#5ad85a" stroke-width="1"/><path d="M320.5 230V268" stroke="#52d452" stroke-width="1"/><rect x="318.5" y="254.5" width="4" height="13" fill="#000" stroke="#5ad85a" stroke-width="1"/><path d="M327.5 148V257" stroke="#52d452" stroke-width="1"/><rect x="325.5" y="196.5" width="4" height="61" fill="#000" stroke="#5ad85a" stroke-width="1"/><path d="M334.5 199V298" stroke="#52d452" stroke-width="1"/><rect x="332.5" y="200.5" width="4" height="69" fill="#e6ffe0" stroke="#5ad85a" stroke-width="1"/><path d="M341.5 242V305" stroke="#52d452" stroke-width="1"/><rect x="339.5" y="268.5" width="4" height="25" fill="#e6ffe0" stroke="#5ad85a" stroke-width="1"/><path d="M349.5 291V358" stroke="#52d452" stroke-width="1"/><rect x="347.5" y="293.5" width="4" height="32" fill="#e6ffe0" stroke="#5ad85a" stroke-width="1"/><path d="M356.5 308V367" stroke="#52d452" stroke-width="1"/><rect x="354.5" y="324.5" width="4" height="43" fill="#e6ffe0" stroke="#5ad85a" stroke-width="1"/><path d="M363.5 346V383" stroke="#52d452" stroke-width="1"/><rect x="361.5" y="367.5" width="4" height="8" fill="#e6ffe0" stroke="#5ad85a" stroke-width="1"/><path d="M370.5 359V379" stroke="#52d452" stroke-width="1"/><rect x="368.5" y="366.5" width="4" height="9" fill="#000" stroke="#5ad85a" stroke-width="1"/><rect x="0" y="0" width="3" height="464" fill="#000"/><path d="M3.5 2.5V443" stroke="#c4c4c4" stroke-width="1"/><text x="7" y="15.5" font-family="Liberation Sans" font-size="11.1" fill="#e8e8e8" xml:space="preserve">EURUSD,M15  1.08180 1.08203 1.08178 1.08203</text><text x="3.5" y="457" font-family="Liberation Sans" font-size="11.5" fill="#e8e8e8">1 Aug 2024</text><text x="90.0" y="457" font-family="Liberation Sans" font-size="11.5" fill="#e8e8e8">1 Aug 08:45</text><text x="176.5" y="457" font-family="Liberation Sans" font-size="11.5" fill="#e8e8e8">1 Aug 11:45</text><text x="263.0" y="457" font-family="Liberation Sans" font-size="11.5" fill="#e8e8e8">1 Aug 14:45</text><text x="349.5" y="457" font-family="Liberation Sans" font-size="11.5" fill="#e8e8e8">1 Aug 17:45</text></svg>
<div class="a" style="left:469px;top:575px;width:371px;height:28px;background:#f0f0f0"></div>
<div class="a" style="left:469px;top:575px;width:371px;height:1px;background:#fafafa"></div>
<div class="a" style="left:469px;top:576px;width:371px;height:2px;background:#5a5a5a"></div>
<div class="a" style="left:468px;top:576px;width:2px;height:23px;background:#5a5a5a"></div>
<div class="a" style="left:470px;top:578px;width:370px;height:21px;background:#efefef"></div>
<div class="t" style="left:486px;top:582px;font-size:12.1px;color:#8a8a8a">EURUSD,H1</div>
<div class="a" style="left:568px;top:581px;width:1px;height:16px;background:#9a9a9a"></div>
<div class="t" style="left:580px;top:582px;font-size:12.1px;color:#8a8a8a">EURUSD,M1</div>
<div class="a" style="left:665px;top:581px;width:1px;height:16px;background:#9a9a9a"></div>
<div class="t" style="left:678px;top:582px;font-size:12.1px;color:#8a8a8a">EURUSD,M15 (visual)</div>
<div class="a" style="left:816px;top:581px;width:1px;height:16px;background:#9a9a9a"></div>
<div class="t" style="left:828px;top:582px;font-size:12.1px;color:#8a8a8a">EURUSD</div>
<div class="a" style="left:0px;top:598px;width:470px;height:1px;background:#5f5f5f"></div>
<div class="a" style="left:0px;top:599px;width:840px;height:4px;background:#f7f7f7"></div>
<div class="a" style="left:0px;top:603px;width:840px;height:302px;background:#fff"></div>
<div class="a" style="left:0px;top:603px;width:840px;height:1px;background:#c9c9c9"></div>
<div class="a" style="left:2px;top:614px;width:134px;height:22px;background:#e5e5e5;border:1px solid #adadad"></div>
<div class="t" style="left:5px;top:619px;font-size:12.4px;color:#1a1a1a">Expert Advisor</div>
<svg class="a" style="left:119px;top:620px;" width="14" height="10" viewBox="0 0 14 10"><path d="M2 3l5 4.5l5 -4.5" stroke="#555" stroke-width="1.1" fill="none"/></svg>
<div class="a" style="left:145px;top:614px;width:700px;height:22px;background:#f0f0f0;border:1px solid #7a7a7a"></div>
<div class="t" style="left:148px;top:619px;font-size:12.4px;color:#1a1a1a">dens1__.ex4</div>
<div class="t" style="right:1566px;top:651px;font-size:12.4px;color:#1a1a1a">Symbol:</div>
<div class="a" style="left:145px;top:645px;width:700px;height:21px;background:#e2e2e2;border:1px solid #cfcfcf"></div>
<div class="t" style="left:148px;top:650px;font-size:12.4px;color:#1a1a1a">EURUSD, Euro vs US Dollar</div>
<div class="t" style="right:1566px;top:682px;font-size:12.4px;color:#1a1a1a">Model:</div>
<div class="a" style="left:145px;top:676px;width:700px;height:21px;background:#e2e2e2;border:1px solid #cfcfcf"></div>
<div class="t" style="left:148px;top:681px;font-size:12.1px;color:#1a1a1a;letter-spacing:-0.1px">Every tick (the most precise method based on all available least timeframes to generate each tick)</div>
<div class="t" style="right:1577px;top:716px;font-size:12.4px;color:#1a1a1a">Use date</div>
<div class="a" style="left:128px;top:711px;width:17px;height:17px;background:#fff;border:1px solid #8a8a8a"></div>
<svg class="a" style="left:129px;top:712px;" width="15" height="15" viewBox="0 0 15 15"><path d="M3.5 6.2l2.8 3.2l5.2 -6" stroke="#111" stroke-width="2.5" fill="none"/></svg>
<div class="t" style="left:249px;top:712px;font-size:12.4px;color:#1a1a1a">From:</div>
<div class="a" style="left:288px;top:706px;width:134px;height:22px;background:#fff;border:1px solid #888"></div>
<div class="t" style="left:290px;top:712px;font-size:12.2px;color:#1a1a1a;letter-spacing:-0.5px">2024.07.29</div>
<svg class="a" style="left:392px;top:710px;" width="26" height="14" viewBox="0 0 26 14"><rect x="1" y="1" width="11" height="11" fill="#eee" stroke="#999"/><path d="M1 4h11M4 1v11M7 1v11M10 1v11M1 7h11M1 10h11" stroke="#bbb" stroke-width="0.6"/><path d="M17 5h7l-3.5 4z" fill="#3c4654"/></svg>
<div class="t" style="left:548px;top:712px;font-size:12.4px;color:#1a1a1a">To:</div>
<div class="a" style="left:574px;top:706px;width:135px;height:22px;background:#fff;border:1px solid #888"></div>
<div class="t" style="left:576px;top:712px;font-size:12.2px;color:#1a1a1a;letter-spacing:-0.5px">2024.08.27</div>
<svg class="a" style="left:679px;top:710px;" width="26" height="14" viewBox="0 0 26 14"><rect x="1" y="1" width="11" height="11" fill="#eee" stroke="#999"/><path d="M1 4h11M4 1v11M7 1v11M10 1v11M1 7h11M1 10h11" stroke="#bbb" stroke-width="0.6"/><path d="M17 5h7l-3.5 4z" fill="#3c4654"/></svg>
<div class="a" style="left:574px;top:737px;width:135px;height:22px;background:#fff;border:1px solid #888"></div>
<div class="t" style="left:576px;top:743px;font-size:12.2px;color:#1a1a1a;letter-spacing:-0.5px">2024.09.13</div>
<svg class="a" style="left:679px;top:741px;" width="26" height="14" viewBox="0 0 26 14"><rect x="1" y="1" width="11" height="11" fill="#eee" stroke="#999"/><path d="M1 4h11M4 1v11M7 1v11M10 1v11M1 7h11M1 10h11" stroke="#bbb" stroke-width="0.6"/><path d="M17 5h7l-3.5 4z" fill="#3c4654"/></svg>
<div class="t" style="right:1577px;top:747px;font-size:12.4px;color:#1a1a1a">Visual mode</div>
<div class="a" style="left:128px;top:742px;width:17px;height:17px;background:#fff;border:1px solid #8a8a8a"></div>
<svg class="a" style="left:129px;top:743px;" width="15" height="15" viewBox="0 0 15 15"><path d="M3.5 6.2l2.8 3.2l5.2 -6" stroke="#111" stroke-width="2.5" fill="none"/></svg>
<div class="a" style="left:159px;top:744px;width:188px;height:13px;background:#fbfbfb;border:1px solid #bdbdbd"></div>
<div class="a" style="left:335px;top:739px;width:12px;height:23px;background:#e9e9e9;border:1px solid #a9a9a9"></div>
<div class="a" style="left:363px;top:737px;width:26px;height:25px;background:#eaeaea;border:1px solid #b5b5b5"></div>
<div class="t" style="left:369px;top:744px;font-size:11px;color:#111;font-weight:bold">&gt;&gt;</div>
<div class="a" style="left:397px;top:737px;width:169px;height:25px;background:#e6e6e6;border:1px solid #b9b9b9"></div>
<div class="t" style="left:462px;top:744px;font-size:12.4px;color:#1a1a1a">Skip to</div>
<div class="a" style="left:2px;top:838px;width:840px;height:23px;background:#e6e6e6;border:1px solid #d2d2d2"></div>
<div class="a" style="left:3px;top:839px;width:707px;height:21px;background:#08aa28"></div>
<div class="a" style="left:0px;top:870px;width:840px;height:35px;background:#f0f0f0"></div>
<div class="a" style="left:0px;top:871px;width:840px;height:2px;background:#3a3a3a"></div>
<div class="a" style="left:0px;top:871px;width:66px;height:23px;background:#fff;border:2px solid #2a2a2a;border-top:none;border-left:none"></div>
<div class="t" style="left:8px;top:876px;font-size:13.2px;color:#111">Settings</div>
<div class="t" style="left:77px;top:876px;font-size:13.2px;color:#8a8a8a">Results</div>
<div class="a" style="left:130px;top:874px;width:1px;height:17px;background:#8a8a8a"></div>
<div class="t" style="left:141px;top:876px;font-size:13.2px;color:#8a8a8a">Graph</div>
<div class="a" style="left:188px;top:874px;width:1px;height:17px;background:#8a8a8a"></div>
<div class="t" style="left:200px;top:876px;font-size:13.2px;color:#8a8a8a">Report</div>
<div class="a" style="left:251px;top:874px;width:1px;height:17px;background:#8a8a8a"></div>
<div class="t" style="left:262px;top:876px;font-size:13.2px;color:#8a8a8a">Journal</div>
<div class="a" style="left:316px;top:874px;width:1px;height:17px;background:#8a8a8a"></div>
<div class="a" style="left:0px;top:899px;width:840px;height:1px;background:#c8c8c8"></div>
<div class="a" style="left:0px;top:900px;width:840px;height:5px;background:#f7f7f7"></div>
<div class="a" style="left:826px;top:0px;width:13px;height:905px;background:linear-gradient(90deg,rgba(0,0,0,0),rgba(0,0,0,0.09))"></div>
<div class="a" style="left:839px;top:0px;width:863px;height:905px;background:#f0f0f0;border-left:1px solid #6e6e6e;border-top:1px solid #5a5a5a"></div>
<div class="a" style="left:840px;top:1px;width:862px;height:33px;background:#fff"></div>
<div class="t" style="left:848px;top:12px;font-size:12.4px;color:#1a1a1a">dens1__</div>
<div class="t" style="left:1618px;top:10px;font-size:14.5px;color:#222">?</div>
<svg class="a" style="left:1666px;top:10px;" width="16" height="15" viewBox="0 0 16 15"><path d="M2.5 2.5l11 11M13.5 2.5l-11 11" stroke="#222" stroke-width="1.1"/></svg>
<div class="a" style="left:846px;top:62px;width:849px;height:822px;background:#fff;border:1px solid #dadada"></div>
<div class="a" style="left:848px;top:44px;width:50px;height:19px;background:#f0f0f0;border:1px solid #d9d9d9;border-bottom:none"></div>
<div class="t" style="left:854px;top:47px;font-size:12.4px;color:#1a1a1a">Testing</div>
<div class="a" style="left:898px;top:41px;width:46px;height:22px;background:#fff;border:1px solid #d9d9d9;border-bottom:none"></div>
<div class="t" style="left:905px;top:45px;font-size:12.4px;color:#1a1a1a">Inputs</div>
<div class="a" style="left:944px;top:44px;width:74px;height:19px;background:#f0f0f0;border:1px solid #d9d9d9;border-bottom:none;border-left:none"></div>
<div class="t" style="left:948px;top:47px;font-size:12.1px;color:#1a1a1a">Optimization</div>
<div class="a" style="left:857px;top:71px;width:829px;height:770px;background:#fff;border:1px solid #828282"></div>
<div class="t" style="left:864px;top:78px;font-size:12.4px;color:#1a1a1a">Variable</div>
<div class="t" style="right:446px;top:78px;font-size:12.3px;color:#1a1a1a">Value</div>
<div class="t" style="right:312px;top:78px;font-size:12.3px;color:#1a1a1a">Start</div>
<div class="t" style="right:178px;top:78px;font-size:12.3px;color:#1a1a1a">Step</div>
<div class="t" style="right:42px;top:78px;font-size:12.3px;color:#1a1a1a">Stop</div>
<div class="a" style="left:1126px;top:72px;width:1px;height:22px;background:#e5e5e5"></div>
<div class="a" style="left:1260px;top:72px;width:1px;height:22px;background:#e5e5e5"></div>
<div class="a" style="left:1394px;top:72px;width:1px;height:22px;background:#e5e5e5"></div>
<div class="a" style="left:1528px;top:72px;width:1px;height:22px;background:#e5e5e5"></div>
<div class="a" style="left:858px;top:94px;width:807px;height:1px;background:#d6d6d6"></div>
<div class="a" style="left:858px;top:95px;width:807px;height:745px;overflow:hidden">
<div class="a" style="left:0;top:0.0px;width:807px;height:22.48px;background:#e8e8e8;border-bottom:1px solid #d8d8d8"></div>
<div class="a" style="left:268px;top:0.0px;width:1px;height:22.48px;background:#d4d4d4"></div>
<div class="a" style="left:5.5px;top:3.0px;width:13px;height:13px">
<svg class="a" style="left:0px;top:0px;" width="13" height="13" viewBox="0 0 13 13"><rect x="0" y="0" width="13" height="13" fill="#c4c4c4"/><path d="M1 12.5V1H12.5" stroke="#2a2a2a" stroke-width="2" fill="none"/><path d="M0.5 13V0.5H13" stroke="#777" stroke-width="1" fill="none"/></svg>
</div>
<div class="t" style="left:25.5px;top:5.9px;font-size:11.9px;color:#1a1a1a;letter-spacing:-0.66px">============================</div>
<div class="t" style="left:274px;top:5.9px;font-size:11.9px;color:#1a1a1a;letter-spacing:-0.66px">=============<span style="letter-spacing:0">EXPERT ADVISOR SETTINGS</span>=============</div>
<div class="a" style="left:0;top:22.48px;width:807px;height:22.48px;background:#ffffff;border-bottom:1px solid #d8d8d8"></div>
<div class="a" style="left:268px;top:22.48px;width:1px;height:22.48px;background:#d4d4d4"></div>
<div class="a" style="left:402px;top:22.48px;width:1px;height:22.48px;background:#d4d4d4"></div>
<div class="a" style="left:536px;top:22.48px;width:1px;height:22.48px;background:#d4d4d4"></div>
<div class="a" style="left:670px;top:22.48px;width:1px;height:22.48px;background:#d4d4d4"></div>
<div class="a" style="left:5.5px;top:25.48px;width:13px;height:13px">
<svg class="a" style="left:0px;top:0px;" width="13" height="13" viewBox="0 0 13 13"><rect x="0" y="0" width="13" height="13" fill="#fff"/><path d="M1 12.5V1H12.5" stroke="#2a2a2a" stroke-width="2" fill="none"/><path d="M0.5 13V0.5H13" stroke="#6a6a6a" stroke-width="1" fill="none"/><path d="M12.5 1V12.5H1" stroke="#e6e6e6" stroke-width="1" fill="none"/></svg>
</div>
<div class="t" style="left:25.5px;top:28.380000000000003px;font-size:11.9px;color:#1a1a1a">Risk Method</div>
<div class="t" style="left:274px;top:28.380000000000003px;font-size:11.9px;color:#1a1a1a">Amount Risked</div>
<div class="t" style="left:408px;top:28.380000000000003px;font-size:11.9px;color:#1a1a1a">Current Balance</div>
<div class="t" style="left:676px;top:28.380000000000003px;font-size:11.9px;color:#1a1a1a">highest Balance</div>
<div class="a" style="left:0;top:44.96px;width:807px;height:22.48px;background:#e8e8e8;border-bottom:1px solid #d8d8d8"></div>
<div class="a" style="left:268px;top:44.96px;width:1px;height:22.48px;background:#d4d4d4"></div>
<div class="a" style="left:402px;top:44.96px;width:1px;height:22.48px;background:#d4d4d4"></div>
<div class="a" style="left:536px;top:44.96px;width:1px;height:22.48px;background:#d4d4d4"></div>
<div class="a" style="left:670px;top:44.96px;width:1px;height:22.48px;background:#d4d4d4"></div>
<div class="a" style="left:5.5px;top:47.96px;width:13px;height:13px">
<svg class="a" style="left:0px;top:0px;" width="13" height="13" viewBox="0 0 13 13"><rect x="0" y="0" width="13" height="13" fill="#fff"/><path d="M1 12.5V1H12.5" stroke="#2a2a2a" stroke-width="2" fill="none"/><path d="M0.5 13V0.5H13" stroke="#6a6a6a" stroke-width="1" fill="none"/><path d="M12.5 1V12.5H1" stroke="#e6e6e6" stroke-width="1" fill="none"/></svg>
</div>
<div class="t" style="left:25.5px;top:50.86px;font-size:11.9px;color:#1a1a1a">Use inputted Start Amount</div>
<div class="t" style="left:274px;top:50.86px;font-size:11.9px;color:#1a1a1a">true</div>
<div class="t" style="left:408px;top:50.86px;font-size:11.9px;color:#1a1a1a">false</div>
<div class="t" style="left:676px;top:50.86px;font-size:11.9px;color:#1a1a1a">true</div>
<div class="a" style="left:0;top:67.44px;width:807px;height:22.48px;background:#ffffff;border-bottom:1px solid #d8d8d8"></div>
<div class="a" style="left:268px;top:67.44px;width:1px;height:22.48px;background:#d4d4d4"></div>
<div class="a" style="left:402px;top:67.44px;width:1px;height:22.48px;background:#d4d4d4"></div>
<div class="a" style="left:536px;top:67.44px;width:1px;height:22.48px;background:#d4d4d4"></div>
<div class="a" style="left:670px;top:67.44px;width:1px;height:22.48px;background:#d4d4d4"></div>
<div class="a" style="left:5.5px;top:70.44px;width:13px;height:13px">
<svg class="a" style="left:0px;top:0px;" width="13" height="13" viewBox="0 0 13 13"><rect x="0" y="0" width="13" height="13" fill="#fff"/><path d="M1 12.5V1H12.5" stroke="#2a2a2a" stroke-width="2" fill="none"/><path d="M0.5 13V0.5H13" stroke="#6a6a6a" stroke-width="1" fill="none"/><path d="M12.5 1V12.5H1" stroke="#e6e6e6" stroke-width="1" fill="none"/></svg>
</div>
<div class="t" style="left:25.5px;top:73.34px;font-size:11.9px;color:#1a1a1a">Starting Account Balance</div>
<div class="t" style="right:409px;top:73.34px;font-size:11.9px;color:#1a1a1a">10000.0</div>
<div class="t" style="right:275px;top:73.34px;font-size:11.9px;color:#1a1a1a">10000.0</div>
<div class="t" style="right:141px;top:73.34px;font-size:11.9px;color:#1a1a1a">0.0</div>
<div class="t" style="right:5px;top:73.34px;font-size:11.9px;color:#1a1a1a">0.0</div>
<div class="a" style="left:0;top:89.92px;width:807px;height:22.48px;background:#e8e8e8;border-bottom:1px solid #d8d8d8"></div>
<div class="a" style="left:268px;top:89.92px;width:1px;height:22.48px;background:#d4d4d4"></div>
<div class="a" style="left:402px;top:89.92px;width:1px;height:22.48px;background:#d4d4d4"></div>
<div class="a" style="left:536px;top:89.92px;width:1px;height:22.48px;background:#d4d4d4"></div>
<div class="a" style="left:670px;top:89.92px;width:1px;height:22.48px;background:#d4d4d4"></div>
<div class="a" style="left:5.5px;top:92.92px;width:13px;height:13px">
<svg class="a" style="left:0px;top:0px;" width="13" height="13" viewBox="0 0 13 13"><rect x="0" y="0" width="13" height="13" fill="#fff"/><path d="M1 12.5V1H12.5" stroke="#2a2a2a" stroke-width="2" fill="none"/><path d="M0.5 13V0.5H13" stroke="#6a6a6a" stroke-width="1" fill="none"/><path d="M12.5 1V12.5H1" stroke="#e6e6e6" stroke-width="1" fill="none"/></svg>
</div>
<div class="t" style="left:25.5px;top:95.82000000000001px;font-size:11.9px;color:#1a1a1a">Amount</div>
<div class="t" style="right:409px;top:95.82000000000001px;font-size:11.9px;color:#1a1a1a">500.0</div>
<div class="t" style="right:275px;top:95.82000000000001px;font-size:11.9px;color:#1a1a1a">200.0</div>
<div class="t" style="right:141px;top:95.82000000000001px;font-size:11.9px;color:#1a1a1a">0.0</div>
<div class="t" style="right:5px;top:95.82000000000001px;font-size:11.9px;color:#1a1a1a">0.0</div>
<div class="a" style="left:0;top:112.4px;width:807px;height:22.48px;background:#0a68d0;border-bottom:1px solid #0a68d0"></div>
<div class="a" style="left:268px;top:112.4px;width:1px;height:22.48px;background:#6a9ad8"></div>
<div class="a" style="left:402px;top:112.4px;width:1px;height:22.48px;background:#6a9ad8"></div>
<div class="a" style="left:536px;top:112.4px;width:1px;height:22.48px;background:#6a9ad8"></div>
<div class="a" style="left:670px;top:112.4px;width:1px;height:22.48px;background:#6a9ad8"></div>
<div class="a" style="left:5.5px;top:115.4px;width:13px;height:13px">
<svg class="a" style="left:0px;top:0px;" width="13" height="13" viewBox="0 0 13 13"><rect x="0" y="0" width="13" height="13" fill="#fff"/><path d="M1 12.5V1H12.5" stroke="#2a2a2a" stroke-width="2" fill="none"/><path d="M0.5 13V0.5H13" stroke="#6a6a6a" stroke-width="1" fill="none"/><path d="M12.5 1V12.5H1" stroke="#e6e6e6" stroke-width="1" fill="none"/></svg>
</div>
<div class="t" style="left:25.5px;top:118.30000000000001px;font-size:11.9px;color:#ffffff">Risk %</div>
<div class="t" style="right:409px;top:118.30000000000001px;font-size:11.9px;color:#ffffff">5.0</div>
<div class="t" style="right:275px;top:118.30000000000001px;font-size:11.9px;color:#ffffff">2.0</div>
<div class="t" style="right:141px;top:118.30000000000001px;font-size:11.9px;color:#ffffff">0.0</div>
<div class="t" style="right:5px;top:118.30000000000001px;font-size:11.9px;color:#ffffff">0.0</div>
<div class="a" style="left:0;top:134.88px;width:807px;height:22.48px;background:#e8e8e8;border-bottom:1px solid #d8d8d8"></div>
<div class="a" style="left:268px;top:134.88px;width:1px;height:22.48px;background:#d4d4d4"></div>
<div class="a" style="left:402px;top:134.88px;width:1px;height:22.48px;background:#d4d4d4"></div>
<div class="a" style="left:536px;top:134.88px;width:1px;height:22.48px;background:#d4d4d4"></div>
<div class="a" style="left:670px;top:134.88px;width:1px;height:22.48px;background:#d4d4d4"></div>
<div class="a" style="left:5.5px;top:137.88px;width:13px;height:13px">
<svg class="a" style="left:0px;top:0px;" width="13" height="13" viewBox="0 0 13 13"><rect x="0" y="0" width="13" height="13" fill="#fff"/><path d="M1 12.5V1H12.5" stroke="#2a2a2a" stroke-width="2" fill="none"/><path d="M0.5 13V0.5H13" stroke="#6a6a6a" stroke-width="1" fill="none"/><path d="M12.5 1V12.5H1" stroke="#e6e6e6" stroke-width="1" fill="none"/></svg>
</div>
<div class="t" style="left:25.5px;top:140.78px;font-size:11.9px;color:#1a1a1a">SL %</div>
<div class="t" style="right:409px;top:140.78px;font-size:11.9px;color:#1a1a1a">100.0</div>
<div class="t" style="right:275px;top:140.78px;font-size:11.9px;color:#1a1a1a">100.0</div>
<div class="t" style="right:141px;top:140.78px;font-size:11.9px;color:#1a1a1a">0.0</div>
<div class="t" style="right:5px;top:140.78px;font-size:11.9px;color:#1a1a1a">0.0</div>
<div class="a" style="left:0;top:157.36px;width:807px;height:22.48px;background:#ffffff;border-bottom:1px solid #d8d8d8"></div>
<div class="a" style="left:268px;top:157.36px;width:1px;height:22.48px;background:#d4d4d4"></div>
<div class="a" style="left:402px;top:157.36px;width:1px;height:22.48px;background:#d4d4d4"></div>
<div class="a" style="left:536px;top:157.36px;width:1px;height:22.48px;background:#d4d4d4"></div>
<div class="a" style="left:670px;top:157.36px;width:1px;height:22.48px;background:#d4d4d4"></div>
<div class="a" style="left:5.5px;top:160.36px;width:13px;height:13px">
<svg class="a" style="left:0px;top:0px;" width="13" height="13" viewBox="0 0 13 13"><rect x="0" y="0" width="13" height="13" fill="#fff"/><path d="M1 12.5V1H12.5" stroke="#2a2a2a" stroke-width="2" fill="none"/><path d="M0.5 13V0.5H13" stroke="#6a6a6a" stroke-width="1" fill="none"/><path d="M12.5 1V12.5H1" stroke="#e6e6e6" stroke-width="1" fill="none"/></svg>
</div>
<div class="t" style="left:25.5px;top:163.26000000000002px;font-size:11.9px;color:#1a1a1a">TP Type</div>
<div class="t" style="left:274px;top:163.26000000000002px;font-size:11.9px;color:#1a1a1a">Use TP Ratio</div>
<div class="t" style="left:408px;top:163.26000000000002px;font-size:11.9px;color:#1a1a1a">Use TP Ratio</div>
<div class="t" style="left:676px;top:163.26000000000002px;font-size:11.9px;color:#1a1a1a">Use TP Ratio</div>
<div class="a" style="left:0;top:179.84px;width:807px;height:22.48px;background:#e8e8e8;border-bottom:1px solid #d8d8d8"></div>
<div class="a" style="left:268px;top:179.84px;width:1px;height:22.48px;background:#d4d4d4"></div>
<div class="a" style="left:402px;top:179.84px;width:1px;height:22.48px;background:#d4d4d4"></div>
<div class="a" style="left:536px;top:179.84px;width:1px;height:22.48px;background:#d4d4d4"></div>
<div class="a" style="left:670px;top:179.84px;width:1px;height:22.48px;background:#d4d4d4"></div>
<div class="a" style="left:5.5px;top:182.84px;width:13px;height:13px">
<svg class="a" style="left:0px;top:0px;" width="13" height="13" viewBox="0 0 13 13"><rect x="0" y="0" width="13" height="13" fill="#fff"/><path d="M1 12.5V1H12.5" stroke="#2a2a2a" stroke-width="2" fill="none"/><path d="M0.5 13V0.5H13" stroke="#6a6a6a" stroke-width="1" fill="none"/><path d="M12.5 1V12.5H1" stroke="#e6e6e6" stroke-width="1" fill="none"/></svg>
</div>
<div class="t" style="left:25.5px;top:185.74px;font-size:11.9px;color:#1a1a1a">TP%</div>
<div class="t" style="right:409px;top:185.74px;font-size:11.9px;color:#1a1a1a">0.0</div>
<div class="t" style="right:275px;top:185.74px;font-size:11.9px;color:#1a1a1a">0.0</div>
<div class="t" style="right:141px;top:185.74px;font-size:11.9px;color:#1a1a1a">0.0</div>
<div class="t" style="right:5px;top:185.74px;font-size:11.9px;color:#1a1a1a">0.0</div>
<div class="a" style="left:0;top:202.32px;width:807px;height:22.48px;background:#ffffff;border-bottom:1px solid #d8d8d8"></div>
<div class="a" style="left:268px;top:202.32px;width:1px;height:22.48px;background:#d4d4d4"></div>
<div class="a" style="left:402px;top:202.32px;width:1px;height:22.48px;background:#d4d4d4"></div>
<div class="a" style="left:536px;top:202.32px;width:1px;height:22.48px;background:#d4d4d4"></div>
<div class="a" style="left:670px;top:202.32px;width:1px;height:22.48px;background:#d4d4d4"></div>
<div class="a" style="left:5.5px;top:205.32px;width:13px;height:13px">
<svg class="a" style="left:0px;top:0px;" width="13" height="13" viewBox="0 0 13 13"><rect x="0" y="0" width="13" height="13" fill="#fff"/><path d="M1 12.5V1H12.5" stroke="#2a2a2a" stroke-width="2" fill="none"/><path d="M0.5 13V0.5H13" stroke="#6a6a6a" stroke-width="1" fill="none"/><path d="M12.5 1V12.5H1" stroke="#e6e6e6" stroke-width="1" fill="none"/></svg>
</div>
<div class="t" style="left:25.5px;top:208.22px;font-size:11.9px;color:#1a1a1a">TP Ratio</div>
<div class="t" style="right:409px;top:208.22px;font-size:11.9px;color:#1a1a1a">1.0</div>
<div class="t" style="right:275px;top:208.22px;font-size:11.9px;color:#1a1a1a">2.0</div>
<div class="t" style="right:141px;top:208.22px;font-size:11.9px;color:#1a1a1a">0.0</div>
<div class="t" style="right:5px;top:208.22px;font-size:11.9px;color:#1a1a1a">0.0</div>
<div class="a" style="left:0;top:224.8px;width:807px;height:22.48px;background:#e8e8e8;border-bottom:1px solid #d8d8d8"></div>
<div class="a" style="left:268px;top:224.8px;width:1px;height:22.48px;background:#d4d4d4"></div>
<div class="a" style="left:402px;top:224.8px;width:1px;height:22.48px;background:#d4d4d4"></div>
<div class="a" style="left:536px;top:224.8px;width:1px;height:22.48px;background:#d4d4d4"></div>
<div class="a" style="left:670px;top:224.8px;width:1px;height:22.48px;background:#d4d4d4"></div>
<div class="a" style="left:5.5px;top:227.8px;width:13px;height:13px">
<svg class="a" style="left:0px;top:0px;" width="13" height="13" viewBox="0 0 13 13"><rect x="0" y="0" width="13" height="13" fill="#fff"/><path d="M1 12.5V1H12.5" stroke="#2a2a2a" stroke-width="2" fill="none"/><path d="M0.5 13V0.5H13" stroke="#6a6a6a" stroke-width="1" fill="none"/><path d="M12.5 1V12.5H1" stroke="#e6e6e6" stroke-width="1" fill="none"/></svg>
</div>
<div class="t" style="left:25.5px;top:230.70000000000002px;font-size:11.9px;color:#1a1a1a">Magic Number</div>
<div class="t" style="right:409px;top:230.70000000000002px;font-size:11.9px;color:#1a1a1a">329</div>
<div class="t" style="right:275px;top:230.70000000000002px;font-size:11.9px;color:#1a1a1a">329</div>
<div class="t" style="right:141px;top:230.70000000000002px;font-size:11.9px;color:#1a1a1a">0</div>
<div class="t" style="right:5px;top:230.70000000000002px;font-size:11.9px;color:#1a1a1a">0</div>
<div class="a" style="left:0;top:247.28px;width:807px;height:22.48px;background:#ffffff;border-bottom:1px solid #d8d8d8"></div>
<div class="a" style="left:268px;top:247.28px;width:1px;height:22.48px;background:#d4d4d4"></div>
<div class="a" style="left:402px;top:247.28px;width:1px;height:22.48px;background:#d4d4d4"></div>
<div class="a" style="left:536px;top:247.28px;width:1px;height:22.48px;background:#d4d4d4"></div>
<div class="a" style="left:670px;top:247.28px;width:1px;height:22.48px;background:#d4d4d4"></div>
<div class="a" style="left:5.5px;top:250.28px;width:13px;height:13px">
<svg class="a" style="left:0px;top:0px;" width="13" height="13" viewBox="0 0 13 13"><rect x="0" y="0" width="13" height="13" fill="#fff"/><path d="M1 12.5V1H12.5" stroke="#2a2a2a" stroke-width="2" fill="none"/><path d="M0.5 13V0.5H13" stroke="#6a6a6a" stroke-width="1" fill="none"/><path d="M12.5 1V12.5H1" stroke="#e6e6e6" stroke-width="1" fill="none"/></svg>
</div>
<div class="t" style="left:25.5px;top:253.18px;font-size:11.9px;color:#1a1a1a">Maximum Trades</div>
<div class="t" style="right:409px;top:253.18px;font-size:11.9px;color:#1a1a1a">50</div>
<div class="t" style="right:275px;top:253.18px;font-size:11.9px;color:#1a1a1a">1</div>
<div class="t" style="right:141px;top:253.18px;font-size:11.9px;color:#1a1a1a">0</div>
<div class="t" style="right:5px;top:253.18px;font-size:11.9px;color:#1a1a1a">0</div>
<div class="a" style="left:0;top:269.76px;width:807px;height:22.48px;background:#e8e8e8;border-bottom:1px solid #d8d8d8"></div>
<div class="a" style="left:268px;top:269.76px;width:1px;height:22.48px;background:#d4d4d4"></div>
<div class="a" style="left:402px;top:269.76px;width:1px;height:22.48px;background:#d4d4d4"></div>
<div class="a" style="left:536px;top:269.76px;width:1px;height:22.48px;background:#d4d4d4"></div>
<div class="a" style="left:670px;top:269.76px;width:1px;height:22.48px;background:#d4d4d4"></div>
<div class="a" style="left:5.5px;top:272.76px;width:13px;height:13px">
<svg class="a" style="left:0px;top:0px;" width="13" height="13" viewBox="0 0 13 13"><rect x="0" y="0" width="13" height="13" fill="#fff"/><path d="M1 12.5V1H12.5" stroke="#2a2a2a" stroke-width="2" fill="none"/><path d="M0.5 13V0.5H13" stroke="#6a6a6a" stroke-width="1" fill="none"/><path d="M12.5 1V12.5H1" stroke="#e6e6e6" stroke-width="1" fill="none"/></svg>
</div>
<div class="t" style="left:25.5px;top:275.65999999999997px;font-size:11.9px;color:#1a1a1a">Timeframe</div>
<div class="t" style="left:274px;top:275.65999999999997px;font-size:11.9px;color:#1a1a1a">1 Day</div>
<div class="t" style="left:408px;top:275.65999999999997px;font-size:11.9px;color:#1a1a1a">current</div>
<div class="t" style="left:676px;top:275.65999999999997px;font-size:11.9px;color:#1a1a1a">current</div>
<div class="a" style="left:0;top:292.24px;width:807px;height:22.48px;background:#ffffff;border-bottom:1px solid #d8d8d8"></div>
<div class="a" style="left:268px;top:292.24px;width:1px;height:22.48px;background:#d4d4d4"></div>
<div class="a" style="left:402px;top:292.24px;width:1px;height:22.48px;background:#d4d4d4"></div>
<div class="a" style="left:536px;top:292.24px;width:1px;height:22.48px;background:#d4d4d4"></div>
<div class="a" style="left:670px;top:292.24px;width:1px;height:22.48px;background:#d4d4d4"></div>
<div class="a" style="left:5.5px;top:295.24px;width:13px;height:13px">
<svg class="a" style="left:0px;top:0px;" width="13" height="13" viewBox="0 0 13 13"><rect x="0" y="0" width="13" height="13" fill="#fff"/><path d="M1 12.5V1H12.5" stroke="#2a2a2a" stroke-width="2" fill="none"/><path d="M0.5 13V0.5H13" stroke="#6a6a6a" stroke-width="1" fill="none"/><path d="M12.5 1V12.5H1" stroke="#e6e6e6" stroke-width="1" fill="none"/></svg>
</div>
<div class="t" style="left:25.5px;top:298.14px;font-size:11.9px;color:#1a1a1a">Percentage Entry</div>
<div class="t" style="right:409px;top:298.14px;font-size:11.9px;color:#1a1a1a">61.0</div>
<div class="t" style="right:275px;top:298.14px;font-size:11.9px;color:#1a1a1a">61.0</div>
<div class="t" style="right:141px;top:298.14px;font-size:11.9px;color:#1a1a1a">0.0</div>
<div class="t" style="right:5px;top:298.14px;font-size:11.9px;color:#1a1a1a">0.0</div>
<div class="a" style="left:0;top:314.72px;width:807px;height:22.48px;background:#e8e8e8;border-bottom:1px solid #d8d8d8"></div>
<div class="a" style="left:268px;top:314.72px;width:1px;height:22.48px;background:#d4d4d4"></div>
<div class="a" style="left:5.5px;top:317.72px;width:13px;height:13px">
<svg class="a" style="left:0px;top:0px;" width="13" height="13" viewBox="0 0 13 13"><rect x="0" y="0" width="13" height="13" fill="#c4c4c4"/><path d="M1 12.5V1H12.5" stroke="#2a2a2a" stroke-width="2" fill="none"/><path d="M0.5 13V0.5H13" stroke="#777" stroke-width="1" fill="none"/></svg>
</div>
<div class="t" style="left:25.5px;top:320.62px;font-size:11.9px;color:#1a1a1a">Start Time</div>
<div class="t" style="left:274px;top:320.62px;font-size:11.9px;color:#1a1a1a">00:00</div>
<div class="a" style="left:0;top:337.2px;width:807px;height:22.48px;background:#ffffff;border-bottom:1px solid #d8d8d8"></div>
<div class="a" style="left:268px;top:337.2px;width:1px;height:22.48px;background:#d4d4d4"></div>
<div class="a" style="left:5.5px;top:340.2px;width:13px;height:13px">
<svg class="a" style="left:0px;top:0px;" width="13" height="13" viewBox="0 0 13 13"><rect x="0" y="0" width="13" height="13" fill="#c4c4c4"/><path d="M1 12.5V1H12.5" stroke="#2a2a2a" stroke-width="2" fill="none"/><path d="M0.5 13V0.5H13" stroke="#777" stroke-width="1" fill="none"/></svg>
</div>
<div class="t" style="left:25.5px;top:343.09999999999997px;font-size:11.9px;color:#1a1a1a">Stop Time</div>
<div class="t" style="left:274px;top:343.09999999999997px;font-size:11.9px;color:#1a1a1a">23:59</div>
<div class="a" style="left:0;top:359.68px;width:807px;height:22.48px;background:#e8e8e8;border-bottom:1px solid #d8d8d8"></div>
<div class="a" style="left:268px;top:359.68px;width:1px;height:22.48px;background:#d4d4d4"></div>
<div class="a" style="left:5.5px;top:362.68px;width:13px;height:13px">
<svg class="a" style="left:0px;top:0px;" width="13" height="13" viewBox="0 0 13 13"><rect x="0" y="0" width="13" height="13" fill="#c4c4c4"/><path d="M1 12.5V1H12.5" stroke="#2a2a2a" stroke-width="2" fill="none"/><path d="M0.5 13V0.5H13" stroke="#777" stroke-width="1" fill="none"/></svg>
</div>
<div class="t" style="left:25.5px;top:365.58px;font-size:11.9px;color:#1a1a1a;letter-spacing:-0.66px">============================</div>
<div class="t" style="left:274px;top:365.58px;font-size:11.9px;color:#1a1a1a;letter-spacing:-0.66px">=========================================</div>
<div class="a" style="left:0;top:382.16px;width:807px;height:22.48px;background:#ffffff;border-bottom:1px solid #d8d8d8"></div>
<div class="a" style="left:268px;top:382.16px;width:1px;height:22.48px;background:#d4d4d4"></div>
<div class="a" style="left:402px;top:382.16px;width:1px;height:22.48px;background:#d4d4d4"></div>
<div class="a" style="left:536px;top:382.16px;width:1px;height:22.48px;background:#d4d4d4"></div>
<div class="a" style="left:670px;top:382.16px;width:1px;height:22.48px;background:#d4d4d4"></div>
<div class="a" style="left:5.5px;top:385.16px;width:13px;height:13px">
<svg class="a" style="left:0px;top:0px;" width="13" height="13" viewBox="0 0 13 13"><rect x="0" y="0" width="13" height="13" fill="#fff"/><path d="M1 12.5V1H12.5" stroke="#2a2a2a" stroke-width="2" fill="none"/><path d="M0.5 13V0.5H13" stroke="#6a6a6a" stroke-width="1" fill="none"/><path d="M12.5 1V12.5H1" stroke="#e6e6e6" stroke-width="1" fill="none"/></svg>
</div>
<div class="t" style="left:25.5px;top:388.06px;font-size:11.9px;color:#1a1a1a">Use Fast Trade Entries</div>
<div class="t" style="left:274px;top:388.06px;font-size:11.9px;color:#1a1a1a">false</div>
<div class="t" style="left:408px;top:388.06px;font-size:11.9px;color:#1a1a1a">false</div>
<div class="t" style="left:676px;top:388.06px;font-size:11.9px;color:#1a1a1a">true</div>
<div class="a" style="left:0;top:404.64px;width:807px;height:22.48px;background:#e8e8e8;border-bottom:1px solid #d8d8d8"></div>
<div class="a" style="left:268px;top:404.64px;width:1px;height:22.48px;background:#d4d4d4"></div>
<div class="a" style="left:402px;top:404.64px;width:1px;height:22.48px;background:#d4d4d4"></div>
<div class="a" style="left:536px;top:404.64px;width:1px;height:22.48px;background:#d4d4d4"></div>
<div class="a" style="left:670px;top:404.64px;width:1px;height:22.48px;background:#d4d4d4"></div>
<div class="a" style="left:5.5px;top:407.64px;width:13px;height:13px">
<svg class="a" style="left:0px;top:0px;" width="13" height="13" viewBox="0 0 13 13"><rect x="0" y="0" width="13" height="13" fill="#fff"/><path d="M1 12.5V1H12.5" stroke="#2a2a2a" stroke-width="2" fill="none"/><path d="M0.5 13V0.5H13" stroke="#6a6a6a" stroke-width="1" fill="none"/><path d="M12.5 1V12.5H1" stroke="#e6e6e6" stroke-width="1" fill="none"/></svg>
</div>
<div class="t" style="left:25.5px;top:410.53999999999996px;font-size:11.9px;color:#1a1a1a">Use Fast Continuation Stop</div>
<div class="t" style="left:274px;top:410.53999999999996px;font-size:11.9px;color:#1a1a1a">false</div>
<div class="t" style="left:408px;top:410.53999999999996px;font-size:11.9px;color:#1a1a1a">false</div>
<div class="t" style="left:676px;top:410.53999999999996px;font-size:11.9px;color:#1a1a1a">true</div>
<div class="a" style="left:0;top:427.12px;width:807px;height:22.48px;background:#ffffff;border-bottom:1px solid #d8d8d8"></div>
<div class="a" style="left:268px;top:427.12px;width:1px;height:22.48px;background:#d4d4d4"></div>
<div class="a" style="left:402px;top:427.12px;width:1px;height:22.48px;background:#d4d4d4"></div>
<div class="a" style="left:536px;top:427.12px;width:1px;height:22.48px;background:#d4d4d4"></div>
<div class="a" style="left:670px;top:427.12px;width:1px;height:22.48px;background:#d4d4d4"></div>
<div class="a" style="left:5.5px;top:430.12px;width:13px;height:13px">
<svg class="a" style="left:0px;top:0px;" width="13" height="13" viewBox="0 0 13 13"><rect x="0" y="0" width="13" height="13" fill="#fff"/><path d="M1 12.5V1H12.5" stroke="#2a2a2a" stroke-width="2" fill="none"/><path d="M0.5 13V0.5H13" stroke="#6a6a6a" stroke-width="1" fill="none"/><path d="M12.5 1V12.5H1" stroke="#e6e6e6" stroke-width="1" fill="none"/></svg>
</div>
<div class="t" style="left:25.5px;top:433.02px;font-size:11.9px;color:#1a1a1a">Use Fast Continuation Limit</div>
<div class="t" style="left:274px;top:433.02px;font-size:11.9px;color:#1a1a1a">false</div>
<div class="t" style="left:408px;top:433.02px;font-size:11.9px;color:#1a1a1a">false</div>
<div class="t" style="left:676px;top:433.02px;font-size:11.9px;color:#1a1a1a">true</div>
<div class="a" style="left:0;top:449.6px;width:807px;height:22.48px;background:#e8e8e8;border-bottom:1px solid #d8d8d8"></div>
<div class="a" style="left:268px;top:449.6px;width:1px;height:22.48px;background:#d4d4d4"></div>
<div class="a" style="left:402px;top:449.6px;width:1px;height:22.48px;background:#d4d4d4"></div>
<div class="a" style="left:536px;top:449.6px;width:1px;height:22.48px;background:#d4d4d4"></div>
<div class="a" style="left:670px;top:449.6px;width:1px;height:22.48px;background:#d4d4d4"></div>
<div class="a" style="left:5.5px;top:452.6px;width:13px;height:13px">
<svg class="a" style="left:0px;top:0px;" width="13" height="13" viewBox="0 0 13 13"><rect x="0" y="0" width="13" height="13" fill="#fff"/><path d="M1 12.5V1H12.5" stroke="#2a2a2a" stroke-width="2" fill="none"/><path d="M0.5 13V0.5H13" stroke="#6a6a6a" stroke-width="1" fill="none"/><path d="M12.5 1V12.5H1" stroke="#e6e6e6" stroke-width="1" fill="none"/></svg>
</div>
<div class="t" style="left:25.5px;top:455.5px;font-size:11.9px;color:#1a1a1a">Use Fast Counter Stop Order</div>
<div class="t" style="left:274px;top:455.5px;font-size:11.9px;color:#1a1a1a">false</div>
<div class="t" style="left:408px;top:455.5px;font-size:11.9px;color:#1a1a1a">false</div>
<div class="t" style="left:676px;top:455.5px;font-size:11.9px;color:#1a1a1a">true</div>
<div class="a" style="left:0;top:472.08px;width:807px;height:22.48px;background:#ffffff;border-bottom:1px solid #d8d8d8"></div>
<div class="a" style="left:268px;top:472.08px;width:1px;height:22.48px;background:#d4d4d4"></div>
<div class="a" style="left:402px;top:472.08px;width:1px;height:22.48px;background:#d4d4d4"></div>
<div class="a" style="left:536px;top:472.08px;width:1px;height:22.48px;background:#d4d4d4"></div>
<div class="a" style="left:670px;top:472.08px;width:1px;height:22.48px;background:#d4d4d4"></div>
<div class="a" style="left:5.5px;top:475.08px;width:13px;height:13px">
<svg class="a" style="left:0px;top:0px;" width="13" height="13" viewBox="0 0 13 13"><rect x="0" y="0" width="13" height="13" fill="#fff"/><path d="M1 12.5V1H12.5" stroke="#2a2a2a" stroke-width="2" fill="none"/><path d="M0.5 13V0.5H13" stroke="#6a6a6a" stroke-width="1" fill="none"/><path d="M12.5 1V12.5H1" stroke="#e6e6e6" stroke-width="1" fill="none"/></svg>
</div>
<div class="t" style="left:25.5px;top:477.97999999999996px;font-size:11.9px;color:#1a1a1a">Use Fast Counter Limit Order</div>
<div class="t" style="left:274px;top:477.97999999999996px;font-size:11.9px;color:#1a1a1a">false</div>
<div class="t" style="left:408px;top:477.97999999999996px;font-size:11.9px;color:#1a1a1a">false</div>
<div class="t" style="left:676px;top:477.97999999999996px;font-size:11.9px;color:#1a1a1a">true</div>
<div class="a" style="left:0;top:494.56px;width:807px;height:22.48px;background:#e8e8e8;border-bottom:1px solid #d8d8d8"></div>
<div class="a" style="left:268px;top:494.56px;width:1px;height:22.48px;background:#d4d4d4"></div>
<div class="a" style="left:5.5px;top:497.56px;width:13px;height:13px">
<svg class="a" style="left:0px;top:0px;" width="13" height="13" viewBox="0 0 13 13"><rect x="0" y="0" width="13" height="13" fill="#c4c4c4"/><path d="M1 12.5V1H12.5" stroke="#2a2a2a" stroke-width="2" fill="none"/><path d="M0.5 13V0.5H13" stroke="#777" stroke-width="1" fill="none"/></svg>
</div>
<div class="t" style="left:25.5px;top:500.46px;font-size:11.9px;color:#1a1a1a;letter-spacing:-0.66px">============================</div>
<div class="t" style="left:274px;top:500.46px;font-size:11.9px;color:#1a1a1a;letter-spacing:-0.66px">=========================================</div>
<div class="a" style="left:0;top:517.04px;width:807px;height:22.48px;background:#ffffff;border-bottom:1px solid #d8d8d8"></div>
<div class="a" style="left:268px;top:517.04px;width:1px;height:22.48px;background:#d4d4d4"></div>
<div class="a" style="left:402px;top:517.04px;width:1px;height:22.48px;background:#d4d4d4"></div>
<div class="a" style="left:536px;top:517.04px;width:1px;height:22.48px;background:#d4d4d4"></div>
<div class="a" style="left:670px;top:517.04px;width:1px;height:22.48px;background:#d4d4d4"></div>
<div class="a" style="left:5.5px;top:520.04px;width:13px;height:13px">
<svg class="a" style="left:0px;top:0px;" width="13" height="13" viewBox="0 0 13 13"><rect x="0" y="0" width="13" height="13" fill="#fff"/><path d="M1 12.5V1H12.5" stroke="#2a2a2a" stroke-width="2" fill="none"/><path d="M0.5 13V0.5H13" stroke="#6a6a6a" stroke-width="1" fill="none"/><path d="M12.5 1V12.5H1" stroke="#e6e6e6" stroke-width="1" fill="none"/></svg>
</div>
<div class="t" style="left:25.5px;top:522.9399999999999px;font-size:11.9px;color:#1a1a1a">Use Medium Trade Entries</div>
<div class="t" style="left:274px;top:522.9399999999999px;font-size:11.9px;color:#1a1a1a">false</div>
<div class="t" style="left:408px;top:522.9399999999999px;font-size:11.9px;color:#1a1a1a">false</div>
<div class="t" style="left:676px;top:522.9399999999999px;font-size:11.9px;color:#1a1a1a">true</div>
<div class="a" style="left:0;top:539.52px;width:807px;height:22.48px;background:#e8e8e8;border-bottom:1px solid #d8d8d8"></div>
<div class="a" style="left:268px;top:539.52px;width:1px;height:22.48px;background:#d4d4d4"></div>
<div class="a" style="left:402px;top:539.52px;width:1px;height:22.48px;background:#d4d4d4"></div>
<div class="a" style="left:536px;top:539.52px;width:1px;height:22.48px;background:#d4d4d4"></div>
<div class="a" style="left:670px;top:539.52px;width:1px;height:22.48px;background:#d4d4d4"></div>
<div class="a" style="left:5.5px;top:542.52px;width:13px;height:13px">
<svg class="a" style="left:0px;top:0px;" width="13" height="13" viewBox="0 0 13 13"><rect x="0" y="0" width="13" height="13" fill="#fff"/><path d="M1 12.5V1H12.5" stroke="#2a2a2a" stroke-width="2" fill="none"/><path d="M0.5 13V0.5H13" stroke="#6a6a6a" stroke-width="1" fill="none"/><path d="M12.5 1V12.5H1" stroke="#e6e6e6" stroke-width="1" fill="none"/></svg>
</div>
<div class="t" style="left:25.5px;top:545.42px;font-size:11.9px;color:#1a1a1a">Use Medium Continuation Stop</div>
<div class="t" style="left:274px;top:545.42px;font-size:11.9px;color:#1a1a1a">false</div>
<div class="t" style="left:408px;top:545.42px;font-size:11.9px;color:#1a1a1a">false</div>
<div class="t" style="left:676px;top:545.42px;font-size:11.9px;color:#1a1a1a">true</div>
<div class="a" style="left:0;top:562.0px;width:807px;height:22.48px;background:#ffffff;border-bottom:1px solid #d8d8d8"></div>
<div class="a" style="left:268px;top:562.0px;width:1px;height:22.48px;background:#d4d4d4"></div>
<div class="a" style="left:402px;top:562.0px;width:1px;height:22.48px;background:#d4d4d4"></div>
<div class="a" style="left:536px;top:562.0px;width:1px;height:22.48px;background:#d4d4d4"></div>
<div class="a" style="left:670px;top:562.0px;width:1px;height:22.48px;background:#d4d4d4"></div>
<div class="a" style="left:5.5px;top:565.0px;width:13px;height:13px">
<svg class="a" style="left:0px;top:0px;" width="13" height="13" viewBox="0 0 13 13"><rect x="0" y="0" width="13" height="13" fill="#fff"/><path d="M1 12.5V1H12.5" stroke="#2a2a2a" stroke-width="2" fill="none"/><path d="M0.5 13V0.5H13" stroke="#6a6a6a" stroke-width="1" fill="none"/><path d="M12.5 1V12.5H1" stroke="#e6e6e6" stroke-width="1" fill="none"/></svg>
</div>
<div class="t" style="left:25.5px;top:567.9px;font-size:11.9px;color:#1a1a1a">Use Medium Continuation Limit</div>
<div class="t" style="left:274px;top:567.9px;font-size:11.9px;color:#1a1a1a">false</div>
<div class="t" style="left:408px;top:567.9px;font-size:11.9px;color:#1a1a1a">false</div>
<div class="t" style="left:676px;top:567.9px;font-size:11.9px;color:#1a1a1a">true</div>
<div class="a" style="left:0;top:584.48px;width:807px;height:22.48px;background:#e8e8e8;border-bottom:1px solid #d8d8d8"></div>
<div class="a" style="left:268px;top:584.48px;width:1px;height:22.48px;background:#d4d4d4"></div>
<div class="a" style="left:402px;top:584.48px;width:1px;height:22.48px;background:#d4d4d4"></div>
<div class="a" style="left:536px;top:584.48px;width:1px;height:22.48px;background:#d4d4d4"></div>
<div class="a" style="left:670px;top:584.48px;width:1px;height:22.48px;background:#d4d4d4"></div>
<div class="a" style="left:5.5px;top:587.48px;width:13px;height:13px">
<svg class="a" style="left:0px;top:0px;" width="13" height="13" viewBox="0 0 13 13"><rect x="0" y="0" width="13" height="13" fill="#fff"/><path d="M1 12.5V1H12.5" stroke="#2a2a2a" stroke-width="2" fill="none"/><path d="M0.5 13V0.5H13" stroke="#6a6a6a" stroke-width="1" fill="none"/><path d="M12.5 1V12.5H1" stroke="#e6e6e6" stroke-width="1" fill="none"/></svg>
</div>
<div class="t" style="left:25.5px;top:590.38px;font-size:11.9px;color:#1a1a1a">Use Medium Counter Stop Order</div>
<div class="t" style="left:274px;top:590.38px;font-size:11.9px;color:#1a1a1a">false</div>
<div class="t" style="left:408px;top:590.38px;font-size:11.9px;color:#1a1a1a">false</div>
<div class="t" style="left:676px;top:590.38px;font-size:11.9px;color:#1a1a1a">true</div>
<div class="a" style="left:0;top:606.96px;width:807px;height:22.48px;background:#ffffff;border-bottom:1px solid #d8d8d8"></div>
<div class="a" style="left:268px;top:606.96px;width:1px;height:22.48px;background:#d4d4d4"></div>
<div class="a" style="left:402px;top:606.96px;width:1px;height:22.48px;background:#d4d4d4"></div>
<div class="a" style="left:536px;top:606.96px;width:1px;height:22.48px;background:#d4d4d4"></div>
<div class="a" style="left:670px;top:606.96px;width:1px;height:22.48px;background:#d4d4d4"></div>
<div class="a" style="left:5.5px;top:609.96px;width:13px;height:13px">
<svg class="a" style="left:0px;top:0px;" width="13" height="13" viewBox="0 0 13 13"><rect x="0" y="0" width="13" height="13" fill="#fff"/><path d="M1 12.5V1H12.5" stroke="#2a2a2a" stroke-width="2" fill="none"/><path d="M0.5 13V0.5H13" stroke="#6a6a6a" stroke-width="1" fill="none"/><path d="M12.5 1V12.5H1" stroke="#e6e6e6" stroke-width="1" fill="none"/></svg>
</div>
<div class="t" style="left:25.5px;top:612.86px;font-size:11.9px;color:#1a1a1a">Use Medium Counter Limit Order</div>
<div class="t" style="left:274px;top:612.86px;font-size:11.9px;color:#1a1a1a">false</div>
<div class="t" style="left:408px;top:612.86px;font-size:11.9px;color:#1a1a1a">false</div>
<div class="t" style="left:676px;top:612.86px;font-size:11.9px;color:#1a1a1a">true</div>
<div class="a" style="left:0;top:629.44px;width:807px;height:22.48px;background:#e8e8e8;border-bottom:1px solid #d8d8d8"></div>
<div class="a" style="left:268px;top:629.44px;width:1px;height:22.48px;background:#d4d4d4"></div>
<div class="a" style="left:5.5px;top:632.44px;width:13px;height:13px">
<svg class="a" style="left:0px;top:0px;" width="13" height="13" viewBox="0 0 13 13"><rect x="0" y="0" width="13" height="13" fill="#c4c4c4"/><path d="M1 12.5V1H12.5" stroke="#2a2a2a" stroke-width="2" fill="none"/><path d="M0.5 13V0.5H13" stroke="#777" stroke-width="1" fill="none"/></svg>
</div>
<div class="t" style="left:25.5px;top:635.34px;font-size:11.9px;color:#1a1a1a;letter-spacing:-0.66px">============================</div>
<div class="t" style="left:274px;top:635.34px;font-size:11.9px;color:#1a1a1a;letter-spacing:-0.66px">=========================================</div>
<div class="a" style="left:0;top:651.92px;width:807px;height:22.48px;background:#ffffff;border-bottom:1px solid #d8d8d8"></div>
<div class="a" style="left:268px;top:651.92px;width:1px;height:22.48px;background:#d4d4d4"></div>
<div class="a" style="left:402px;top:651.92px;width:1px;height:22.48px;background:#d4d4d4"></div>
<div class="a" style="left:536px;top:651.92px;width:1px;height:22.48px;background:#d4d4d4"></div>
<div class="a" style="left:670px;top:651.92px;width:1px;height:22.48px;background:#d4d4d4"></div>
<div class="a" style="left:5.5px;top:654.92px;width:13px;height:13px">
<svg class="a" style="left:0px;top:0px;" width="13" height="13" viewBox="0 0 13 13"><rect x="0" y="0" width="13" height="13" fill="#fff"/><path d="M1 12.5V1H12.5" stroke="#2a2a2a" stroke-width="2" fill="none"/><path d="M0.5 13V0.5H13" stroke="#6a6a6a" stroke-width="1" fill="none"/><path d="M12.5 1V12.5H1" stroke="#e6e6e6" stroke-width="1" fill="none"/></svg>
</div>
<div class="t" style="left:25.5px;top:657.8199999999999px;font-size:11.9px;color:#1a1a1a">Use Slow Trade Entries</div>
<div class="t" style="left:274px;top:657.8199999999999px;font-size:11.9px;color:#1a1a1a">false</div>
<div class="t" style="left:408px;top:657.8199999999999px;font-size:11.9px;color:#1a1a1a">false</div>
<div class="t" style="left:676px;top:657.8199999999999px;font-size:11.9px;color:#1a1a1a">true</div>
<div class="a" style="left:0;top:674.4px;width:807px;height:22.48px;background:#e8e8e8;border-bottom:1px solid #d8d8d8"></div>
<div class="a" style="left:268px;top:674.4px;width:1px;height:22.48px;background:#d4d4d4"></div>
<div class="a" style="left:402px;top:674.4px;width:1px;height:22.48px;background:#d4d4d4"></div>
<div class="a" style="left:536px;top:674.4px;width:1px;height:22.48px;background:#d4d4d4"></div>
<div class="a" style="left:670px;top:674.4px;width:1px;height:22.48px;background:#d4d4d4"></div>
<div class="a" style="left:5.5px;top:677.4px;width:13px;height:13px">
<svg class="a" style="left:0px;top:0px;" width="13" height="13" viewBox="0 0 13 13"><rect x="0" y="0" width="13" height="13" fill="#fff"/><path d="M1 12.5V1H12.5" stroke="#2a2a2a" stroke-width="2" fill="none"/><path d="M0.5 13V0.5H13" stroke="#6a6a6a" stroke-width="1" fill="none"/><path d="M12.5 1V12.5H1" stroke="#e6e6e6" stroke-width="1" fill="none"/></svg>
</div>
<div class="t" style="left:25.5px;top:680.3px;font-size:11.9px;color:#1a1a1a">Use Slow Continuation Stop</div>
<div class="t" style="left:274px;top:680.3px;font-size:11.9px;color:#1a1a1a">false</div>
<div class="t" style="left:408px;top:680.3px;font-size:11.9px;color:#1a1a1a">false</div>
<div class="t" style="left:676px;top:680.3px;font-size:11.9px;color:#1a1a1a">true</div>
<div class="a" style="left:0;top:696.88px;width:807px;height:22.48px;background:#ffffff;border-bottom:1px solid #d8d8d8"></div>
<div class="a" style="left:268px;top:696.88px;width:1px;height:22.48px;background:#d4d4d4"></div>
<div class="a" style="left:402px;top:696.88px;width:1px;height:22.48px;background:#d4d4d4"></div>
<div class="a" style="left:536px;top:696.88px;width:1px;height:22.48px;background:#d4d4d4"></div>
<div class="a" style="left:670px;top:696.88px;width:1px;height:22.48px;background:#d4d4d4"></div>
<div class="a" style="left:5.5px;top:699.88px;width:13px;height:13px">
<svg class="a" style="left:0px;top:0px;" width="13" height="13" viewBox="0 0 13 13"><rect x="0" y="0" width="13" height="13" fill="#fff"/><path d="M1 12.5V1H12.5" stroke="#2a2a2a" stroke-width="2" fill="none"/><path d="M0.5 13V0.5H13" stroke="#6a6a6a" stroke-width="1" fill="none"/><path d="M12.5 1V12.5H1" stroke="#e6e6e6" stroke-width="1" fill="none"/></svg>
</div>
<div class="t" style="left:25.5px;top:702.78px;font-size:11.9px;color:#1a1a1a">Use Slow Continuation Limit</div>
<div class="t" style="left:274px;top:702.78px;font-size:11.9px;color:#1a1a1a">false</div>
<div class="t" style="left:408px;top:702.78px;font-size:11.9px;color:#1a1a1a">false</div>
<div class="t" style="left:676px;top:702.78px;font-size:11.9px;color:#1a1a1a">true</div>
<div class="a" style="left:0;top:719.36px;width:807px;height:22.48px;background:#e8e8e8;border-bottom:1px solid #d8d8d8"></div>
<div class="a" style="left:268px;top:719.36px;width:1px;height:22.48px;background:#d4d4d4"></div>
<div class="a" style="left:402px;top:719.36px;width:1px;height:22.48px;background:#d4d4d4"></div>
<div class="a" style="left:536px;top:719.36px;width:1px;height:22.48px;background:#d4d4d4"></div>
<div class="a" style="left:670px;top:719.36px;width:1px;height:22.48px;background:#d4d4d4"></div>
<div class="a" style="left:5.5px;top:722.36px;width:13px;height:13px">
<svg class="a" style="left:0px;top:0px;" width="13" height="13" viewBox="0 0 13 13"><rect x="0" y="0" width="13" height="13" fill="#fff"/><path d="M1 12.5V1H12.5" stroke="#2a2a2a" stroke-width="2" fill="none"/><path d="M0.5 13V0.5H13" stroke="#6a6a6a" stroke-width="1" fill="none"/><path d="M12.5 1V12.5H1" stroke="#e6e6e6" stroke-width="1" fill="none"/></svg>
</div>
<div class="t" style="left:25.5px;top:725.26px;font-size:11.9px;color:#1a1a1a">Use Slow Counter Stop Order</div>
<div class="t" style="left:274px;top:725.26px;font-size:11.9px;color:#1a1a1a">false</div>
<div class="t" style="left:408px;top:725.26px;font-size:11.9px;color:#1a1a1a">false</div>
<div class="t" style="left:676px;top:725.26px;font-size:11.9px;color:#1a1a1a">true</div>
<div class="a" style="left:0;top:741.84px;width:807px;height:22.48px;background:#ffffff;border-bottom:1px solid #d8d8d8"></div>
<div class="a" style="left:268px;top:741.84px;width:1px;height:22.48px;background:#d4d4d4"></div>
<div class="a" style="left:402px;top:741.84px;width:1px;height:22.48px;background:#d4d4d4"></div>
<div class="a" style="left:536px;top:741.84px;width:1px;height:22.48px;background:#d4d4d4"></div>
<div class="a" style="left:670px;top:741.84px;width:1px;height:22.48px;background:#d4d4d4"></div>
<div class="a" style="left:5.5px;top:744.84px;width:13px;height:13px">
<svg class="a" style="left:0px;top:0px;" width="13" height="13" viewBox="0 0 13 13"><rect x="0" y="0" width="13" height="13" fill="#fff"/><path d="M1 12.5V1H12.5" stroke="#2a2a2a" stroke-width="2" fill="none"/><path d="M0.5 13V0.5H13" stroke="#6a6a6a" stroke-width="1" fill="none"/><path d="M12.5 1V12.5H1" stroke="#e6e6e6" stroke-width="1" fill="none"/></svg>
</div>
<div class="t" style="left:25.5px;top:747.74px;font-size:11.9px;color:#1a1a1a">Use Slow Counter Limit Order</div>
<div class="t" style="left:274px;top:747.74px;font-size:11.9px;color:#1a1a1a">false</div>
<div class="t" style="left:408px;top:747.74px;font-size:11.9px;color:#1a1a1a">false</div>
<div class="t" style="left:676px;top:747.74px;font-size:11.9px;color:#1a1a1a">true</div>
<div class="a" style="left:0;top:764.32px;width:807px;height:22.48px;background:#e8e8e8;border-bottom:1px solid #d8d8d8"></div>
<div class="a" style="left:268px;top:764.32px;width:1px;height:22.48px;background:#d4d4d4"></div>
<div class="a" style="left:402px;top:764.32px;width:1px;height:22.48px;background:#d4d4d4"></div>
<div class="a" style="left:536px;top:764.32px;width:1px;height:22.48px;background:#d4d4d4"></div>
<div class="a" style="left:670px;top:764.32px;width:1px;height:22.48px;background:#d4d4d4"></div>
<div class="a" style="left:5.5px;top:767.32px;width:13px;height:13px">
<svg class="a" style="left:0px;top:0px;" width="13" height="13" viewBox="0 0 13 13"><rect x="0" y="0" width="13" height="13" fill="#fff"/><path d="M1 12.5V1H12.5" stroke="#2a2a2a" stroke-width="2" fill="none"/><path d="M0.5 13V0.5H13" stroke="#6a6a6a" stroke-width="1" fill="none"/><path d="M12.5 1V12.5H1" stroke="#e6e6e6" stroke-width="1" fill="none"/></svg>
</div>
<div class="t" style="left:25.5px;top:770.22px;font-size:11.9px;color:#1a1a1a">Use Slow Counter Limit Order</div>
<div class="t" style="left:274px;top:770.22px;font-size:11.9px;color:#1a1a1a">false</div>
<div class="t" style="left:408px;top:770.22px;font-size:11.9px;color:#1a1a1a">false</div>
<div class="t" style="left:676px;top:770.22px;font-size:11.9px;color:#1a1a1a">true</div>
</div>
<div class="a" style="left:1665px;top:72px;width:20px;height:768px;background:#f0f0f0"></div>
<div class="a" style="left:1667px;top:92px;width:16px;height:364px;background:#cdcdcd"></div>
<svg class="a" style="left:1668px;top:77px;" width="14" height="12" viewBox="0 0 14 12"><path d="M2.5 8l4.5 -4.5l4.5 4.5" stroke="#606060" stroke-width="1.3" fill="none"/></svg>
<svg class="a" style="left:1668px;top:823px;" width="14" height="12" viewBox="0 0 14 12"><path d="M2.5 4l4.5 4.5l4.5 -4.5" stroke="#606060" stroke-width="1.3" fill="none"/></svg>
<div class="a" style="left:1426px;top:851px;width:124px;height:23px;background:#e1e1e1;border:1px solid #adadad;"></div>
<div class="t" style="left:1426px;top:857px;width:124px;text-align:center;font-size:12.4px;color:#1a1a1a">Load</div>
<div class="a" style="left:1561px;top:851px;width:124px;height:23px;background:#e1e1e1;border:1px solid #adadad;"></div>
<div class="t" style="left:1561px;top:857px;width:124px;text-align:center;font-size:12.4px;color:#1a1a1a">Save</div>
<div class="a" style="left:1409px;top:892px;width:88px;height:23px;background:#e1e1e1;border:1px solid #adadad;border:2px solid #0078d7"></div>
<div class="t" style="left:1409px;top:898px;width:88px;text-align:center;font-size:12.4px;color:#1a1a1a">OK</div>
<div class="a" style="left:1506px;top:892px;width:88px;height:23px;background:#e1e1e1;border:1px solid #adadad;"></div>
<div class="t" style="left:1506px;top:898px;width:88px;text-align:center;font-size:12.4px;color:#1a1a1a">Cancel</div>
<div class="a" style="left:1603px;top:892px;width:88px;height:23px;background:#e1e1e1;border:1px solid #adadad;"></div>
<div class="t" style="left:1603px;top:898px;width:88px;text-align:center;font-size:12.4px;color:#1a1a1a">Reset</div>
<div class="a" style="left:1700px;top:0px;width:2px;height:905px;background:#f0f0f0;border-left:1px solid #8a8a8a"></div></body></html>
